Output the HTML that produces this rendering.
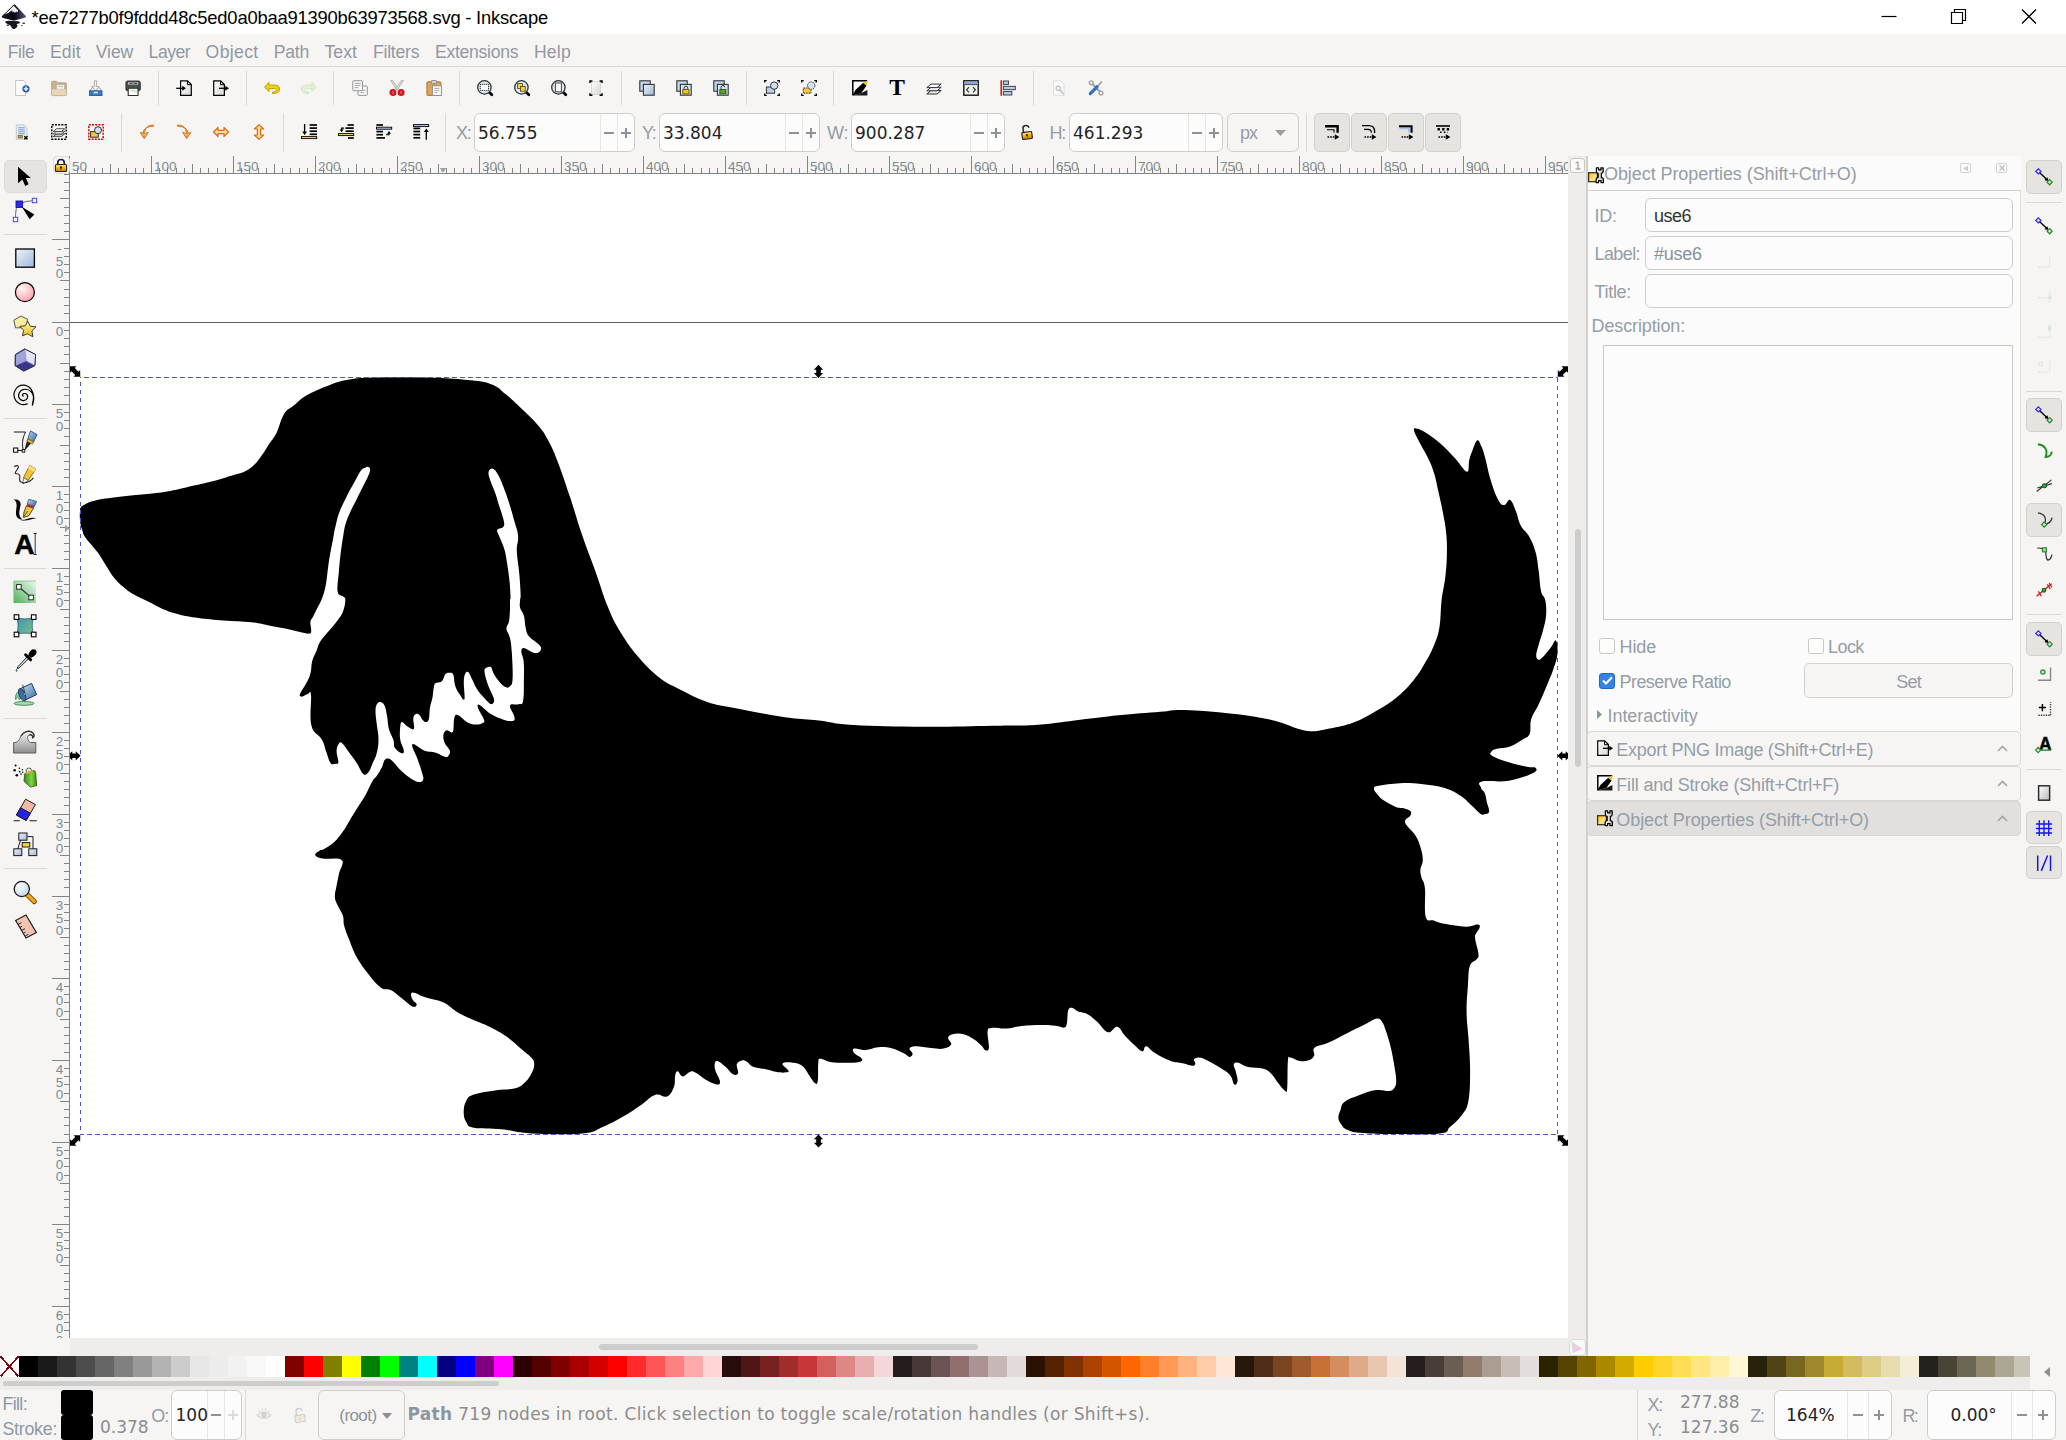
<!DOCTYPE html><html><head><meta charset="utf-8"><title>Inkscape</title><style>
*{box-sizing:border-box;margin:0;padding:0}
html,body{width:2066px;height:1440px;overflow:hidden;background:#f6f5f4}
body{position:relative;font-family:"Liberation Sans",sans-serif;color:#2e3436}
.a{position:absolute}
.t{position:absolute;white-space:pre;line-height:1}
.dj{font-family:"DejaVu Sans",sans-serif}
.g{color:#929aa3}
.fld{position:absolute;background:#fcfcfc;border:1px solid #d1cdc8;border-radius:6px}
.vs{position:absolute;width:1px;background:#e8e6e3}
.sep{position:absolute;background:#dcd9d5}
.tg{position:absolute;background:#e5e4e1;border:1px solid #d4d1cd;border-radius:5px}
svg{position:absolute;overflow:visible}
</style></head><body>
<svg width="0" height="0" style="left:0;top:0"><defs>
<linearGradient id="gPg" x1="0" y1="0" x2="1" y2="1"><stop offset="0" stop-color="#fff"/><stop offset="1" stop-color="#d6d6d2"/></linearGradient>
<linearGradient id="gBl" x1="0" y1="0" x2="1" y2="1"><stop offset="0" stop-color="#eef3f9"/><stop offset="1" stop-color="#9db8d8"/></linearGradient>
<linearGradient id="gPk" x1="0" y1="0" x2="0" y2="1"><stop offset="0" stop-color="#ff9aa2"/><stop offset="1" stop-color="#ffeef0"/></linearGradient>
<linearGradient id="gYl" x1="0" y1="0" x2="0" y2="1"><stop offset="0" stop-color="#fff3a0"/><stop offset="1" stop-color="#e8c21a"/></linearGradient>
<linearGradient id="gGr" x1="0" y1="0" x2="1" y2="1"><stop offset="0" stop-color="#9bd3a0"/><stop offset="1" stop-color="#e9f6ea"/></linearGradient>
<linearGradient id="gMs" x1="0" y1="0" x2="1" y2="1"><stop offset="0" stop-color="#3d8fb5"/><stop offset="1" stop-color="#7cc28c"/></linearGradient>
<linearGradient id="gLk" x1="0" y1="0" x2="0" y2="1"><stop offset="0" stop-color="#ffe680"/><stop offset=".5" stop-color="#f5b400"/><stop offset="1" stop-color="#c17d11"/></linearGradient>
<linearGradient id="gOr" x1="0" y1="0" x2="0" y2="1"><stop offset="0" stop-color="#fbd9a5"/><stop offset="1" stop-color="#e67e13"/></linearGradient>
<linearGradient id="gGy" x1="0" y1="0" x2="0" y2="1"><stop offset="0" stop-color="#f4f4f4"/><stop offset="1" stop-color="#8e8e8e"/></linearGradient>
<linearGradient id="gCu" x1="0" y1="0" x2="1" y2="1"><stop offset="0" stop-color="#dfe3f6"/><stop offset="1" stop-color="#3a3f9a"/></linearGradient>
<radialGradient id="gPk2" cx=".35" cy=".3" r=".8"><stop offset="0" stop-color="#fff5f6"/><stop offset="1" stop-color="#ff9ca6"/></radialGradient>
<linearGradient id="gPen" x1="0" y1="0" x2="1" y2="1"><stop offset="0" stop-color="#b9d5ee"/><stop offset="1" stop-color="#2f6aa8"/></linearGradient>
<linearGradient id="gGrad" x1="0" y1="1" x2="1" y2="0"><stop offset="0" stop-color="#4db25c"/><stop offset="1" stop-color="#eef8ef"/></linearGradient>
<linearGradient id="gBk" x1="0" y1="0" x2="1" y2="1"><stop offset="0" stop-color="#d5e6f5"/><stop offset="1" stop-color="#2f6aa8"/></linearGradient>
<linearGradient id="gCan" x1="0" y1="0" x2="1" y2="0"><stop offset="0" stop-color="#3d8a16"/><stop offset=".6" stop-color="#7ed348"/><stop offset="1" stop-color="#3d8a16"/></linearGradient>
<radialGradient id="gLens" cx=".35" cy=".3" r=".8"><stop offset="0" stop-color="#fff"/><stop offset="1" stop-color="#bcd3e8"/></radialGradient>
<linearGradient id="gOP" x1="0" y1="0" x2="1" y2="1"><stop offset="0" stop-color="#fcc200"/><stop offset=".6" stop-color="#fde58a"/><stop offset="1" stop-color="#f9c400"/></linearGradient>
<linearGradient id="gWr" x1="0" y1="0" x2="1" y2="0"><stop offset="0" stop-color="#ffffff"/><stop offset="1" stop-color="#b5b5b5"/></linearGradient>
<linearGradient id="gPg2" x1="0" y1="0" x2="1" y2="1"><stop offset="0" stop-color="#ffffff"/><stop offset="1" stop-color="#b9b9b9"/></linearGradient>
</defs></svg>
<div class="a" style="left:0;top:0;width:2066px;height:34px;background:#fff"></div>
<svg style="left:0;top:0" width="28" height="34" viewBox="0 0 28 34"><defs><linearGradient id="gLg" x1="0" y1="0" x2="1" y2="0"><stop offset="0" stop-color="#1c1c22"/><stop offset=".5" stop-color="#05050c"/><stop offset="1" stop-color="#565c7c"/></linearGradient></defs><path d="M13.65 4.7 L1.8 16.3 Q1.4 17.6 3 18 L12 20.3 Q13.8 20.7 15.6 20.2 L24.8 17.8 Q26.5 17.2 25.8 16.1 L15.3 5.1 Q14.5 4.3 13.65 4.7Z" fill="url(#gLg)"/><path d="M13.7 5.7 L4.6 14.6 L8.6 12.7 L12.2 10.2 L12.7 12.8 L14 11.5 L15 13 L16.2 11.5 L17.4 12.2 L18.2 10.4 Z" fill="#f4f4f6"/><path d="M5.2 21.5 Q9 20.2 13 21.1 L18.4 21.2 Q21.2 22.4 19 23.5 L16.6 24.1 Q18.4 26 16.6 27.4 L14.6 29 Q12.6 29.5 11.8 27.8 L10.4 25.6 L7 23.7 Q4.6 22.6 5.2 21.5Z" fill="#15171f"/><ellipse cx="7.8" cy="25.2" rx="1.2" ry=".75" fill="#15171f"/><ellipse cx="23.7" cy="23.2" rx="1.5" ry=".7" fill="#2a2c36"/><ellipse cx="21.9" cy="25.6" rx="1" ry=".5" fill="#4a4c56"/></svg>
<svg style="left:1870px;top:0" width="196" height="34" viewBox="0 0 196 34"><path d="M11.5 16.5h15" stroke="#000" stroke-width="1.2"/><path d="M81.5 12.5h11v11h-11zM84.5 12.5v-3h11v11h-3" fill="none" stroke="#000" stroke-width="1.2"/><path d="M152 9.5l14 14M166 9.5l-14 14" stroke="#000" stroke-width="1.3"/></svg>
<div class="t " id="F1" style="left:31.5px;top:9px;font-size:18.4px;color:#000;letter-spacing:-0.218px">*ee7277b0f9fddd48c5ed0a0baa91390b63973568.svg - Inkscape</div>
<div class="t " id="F2" style="left:7.7px;top:44.1px;font-size:17.6px;color:#9198a2;letter-spacing:-0.440px">File</div>
<div class="t " id="F3" style="left:50.0px;top:44.1px;font-size:17.6px;color:#9198a2;letter-spacing:0.093px">Edit</div>
<div class="t " id="F4" style="left:95.8px;top:44.1px;font-size:17.6px;color:#9198a2;letter-spacing:-0.107px">View</div>
<div class="t " id="F5" style="left:148.6px;top:44.1px;font-size:17.6px;color:#9198a2;letter-spacing:-0.483px">Layer</div>
<div class="t " id="F6" style="left:205.6px;top:44.1px;font-size:17.6px;color:#9198a2;letter-spacing:0.357px">Object</div>
<div class="t " id="F7" style="left:273.7px;top:44.1px;font-size:17.6px;color:#9198a2;letter-spacing:-0.201px">Path</div>
<div class="t " id="F8" style="left:324.5px;top:44.1px;font-size:17.6px;color:#9198a2;letter-spacing:0.030px">Text</div>
<div class="t " id="F9" style="left:373.0px;top:44.1px;font-size:17.6px;color:#9198a2;letter-spacing:-0.244px">Filters</div>
<div class="t " id="F10" style="left:435.0px;top:44.1px;font-size:17.6px;color:#9198a2;letter-spacing:-0.286px">Extensions</div>
<div class="t " id="F11" style="left:533.9000000000001px;top:44.1px;font-size:17.6px;color:#9198a2;letter-spacing:0.228px">Help</div>
<div class="a" style="left:0;top:66px;width:2066px;height:1px;background:#dad7d3"></div>
<svg style="left:14.0px;top:80.0px" width="16" height="16" viewBox="0 0 16 16" ><path d="M1.6 .5h8l2 2v13h-10z" fill="#fdfdfd" stroke="#bdbdbd" stroke-width=".9"/><circle cx="12" cy="8.8" r="3.6" fill="#2a5db0"/><path d="M9.8 8.8h4.4M12 6.6v4.4" stroke="#fff" stroke-width="1.3"/></svg>
<svg style="left:51.0px;top:80.0px" width="16" height="16" viewBox="0 0 16 16" ><path d="M.6 2.3q0-1 1-1h4l1.4 1.5h7.4q1 0 1 1v10.8q0 1-1 1h-12.8q-1 0-1-1z" fill="#c9b18c" stroke="#b69e7a" stroke-width=".8"/><rect x="5.3" y="4.8" width="8.2" height="4.4" fill="#f3f3f3" stroke="#a9a9a9" stroke-width=".6"/><path d="M7 6.6h5" stroke="#b5b5b5" stroke-width=".8"/><path d="M.9 10.3q0-1 1-1h12.2q1 0 1 1v4.2q0 .8-1 .8h-12.2q-1 0-1-.8z" fill="#e7d6bb"/></svg>
<svg style="left:88.0px;top:80.0px" width="16" height="16" viewBox="0 0 16 16" ><path d="M6.3 .8h2.4v5.8h2.6L7.5 10.6 3.7 6.6h2.6z" fill="#f0f0f0" stroke="#9c9c9c" stroke-width=".8"/><path d="M2 11 L3.6 8h1.4M13.6 11 L12 8h-1.4" stroke="#a0a0a0" fill="none" stroke-width=".8"/><rect x="1.5" y="10.8" width="12.5" height="4.7" fill="#3b78c6" stroke="#2b5b9e" stroke-width=".9"/><rect x="5.6" y="11.8" width="4.4" height="1.5" fill="#e4ecf6"/></svg>
<svg style="left:125.0px;top:80.0px" width="16" height="16" viewBox="0 0 16 16" ><rect x=".9" y="1" width="14.4" height="9.8" rx="1.6" fill="#4b4e50" stroke="#2c2e2f" stroke-width=".9"/><rect x="3" y="2.3" width="10.2" height="2.3" fill="#bfc1c2"/><rect x="4.5" y="2.9" width="3" height="1.1" fill="#4b4e50"/><rect x="8.5" y="2.9" width="3.5" height="1.1" fill="#4b4e50"/><path d="M3.2 8.3h9.8v7.2h-9.8z" fill="#fff" stroke="#2c2e2f" stroke-width="1.1"/><path d="M5 10.3h4.5v1.6h2.5" stroke="#9cd47e" stroke-width=".8" fill="none"/></svg>
<div class="sep" style="left:157.5px;top:71px;width:1px;height:34px"></div>
<svg style="left:176.0px;top:80.0px" width="16" height="16" viewBox="0 0 16 16" ><path d="M4.6 .8h7l3.7 3.7v10.8h-10.7z" fill="url(#gPg)" stroke="#000" stroke-width="1.2"/><path d="M11.4 1v3.7h3.7" fill="none" stroke="#000" stroke-width="1"/><path d="M.2 8.3h7" stroke="#000" stroke-width="1.3"/><path d="M6.3 5.8 L10 8.3 L6.3 10.8z" fill="#000"/></svg>
<svg style="left:213.0px;top:80.0px" width="16" height="16" viewBox="0 0 16 16" ><path d="M.7 .8h7l3.7 3.7v10.8h-10.7z" fill="url(#gPg)" stroke="#000" stroke-width="1.2"/><path d="M7.5 1v3.7h3.7" fill="none" stroke="#000" stroke-width="1"/><path d="M6 8.3h7" stroke="#000" stroke-width="1.3"/><path d="M12.3 5.8 L16 8.3 L12.3 10.8z" fill="#000"/></svg>
<div class="sep" style="left:245.5px;top:71px;width:1px;height:34px"></div>
<svg style="left:263.5px;top:80.0px" width="16" height="16" viewBox="0 0 16 16" ><path d="M.5 7 L5 2.3 V5 H10.5 Q15.6 5 15.6 9.2 Q15.6 13.6 8.3 13.5 L8.6 12 Q12.6 12.2 12.8 9.8 Q12.8 8.5 10.5 8.6 H5 V11.6Z" fill="#edd400" stroke="#b89c00" stroke-width=".9" stroke-linejoin="round"/></svg>
<svg style="left:300.5px;top:80.0px" width="16" height="16" viewBox="0 0 16 16" ><path d="M15.5 7 L11 2.3 V5 H5.5 Q.4 5 .4 9.2 Q.4 13.6 7.7 13.5 L7.4 12 Q3.4 12.2 3.2 9.8 Q3.2 8.5 5.5 8.6 H11 V11.6Z" fill="#e1f0d6" stroke="#cfe4c1" stroke-width=".9" stroke-linejoin="round"/></svg>
<div class="sep" style="left:333.0px;top:71px;width:1px;height:34px"></div>
<svg style="left:351.5px;top:80.0px" width="16" height="16" viewBox="0 0 16 16" ><rect x="6" y="6" width="9.3" height="9.4" rx="1" fill="#f6f6f6" stroke="#8c8c8c" stroke-width=".9"/><path d="M8.5 10.5h5M8.5 12.5h3.3" stroke="#a3a3a3" stroke-width=".9"/><rect x=".8" y=".7" width="9.7" height="10" rx="1" fill="#f6f6f6" stroke="#8c8c8c" stroke-width=".9"/><path d="M2.8 3.4h5.7M2.8 5.5h5.7M2.8 7.6h3.6" stroke="#a3a3a3" stroke-width=".9"/></svg>
<svg style="left:388.5px;top:80.0px" width="16" height="16" viewBox="0 0 16 16" ><path d="M1.6 .4 L3.6 .4 L9.4 9 L7.8 10.2z" fill="#e3e3e3" stroke="#8d8d8d" stroke-width=".6"/><path d="M14.4 .4 L12.4 .4 L6.6 9 L8.2 10.2z" fill="#e3e3e3" stroke="#8d8d8d" stroke-width=".6"/><circle cx="3.9" cy="12.5" r="2.2" fill="#f4f4f4" stroke="#d4141c" stroke-width="2.6"/><circle cx="12.1" cy="12.5" r="2.2" fill="#f4f4f4" stroke="#d4141c" stroke-width="2.6"/><circle cx="3.9" cy="12.5" r=".7" fill="#d4141c"/><circle cx="12.1" cy="12.5" r=".7" fill="#d4141c"/></svg>
<svg style="left:426.0px;top:80.0px" width="16" height="16" viewBox="0 0 16 16" ><rect x=".9" y="1.8" width="14" height="13.6" rx="1" fill="#dca35e" stroke="#a96d1d" stroke-width=".9"/><rect x="5.3" y=".5" width="5.2" height="3.2" rx="1" fill="#d3d3d3" stroke="#787878" stroke-width=".8"/><rect x="6.4" y="5.8" width="9" height="9.7" fill="#f9f9f9" stroke="#8c8c8c" stroke-width=".9"/><path d="M8.4 8.4h5M8.4 10.4h5M8.4 12.4h3.2" stroke="#a3a3a3" stroke-width=".9"/></svg>
<div class="sep" style="left:458.5px;top:71px;width:1px;height:34px"></div>
<svg style="left:476.5px;top:80.0px" width="16" height="16" viewBox="0 0 16 16" ><path d="M12.2 12.2 L14.8 14.8" stroke="#000" stroke-width="2.8" stroke-linecap="round"/><circle cx="7.4" cy="7.4" r="6.7" fill="#dce7f2" stroke="#2e3436" stroke-width="1.3"/><rect x="3.3" y="4.4" width="8.2" height="6" fill="#fff" stroke="#000" stroke-dasharray="1 1" stroke-width="1"/></svg>
<svg style="left:513.5px;top:80.0px" width="16" height="16" viewBox="0 0 16 16" ><path d="M12.2 12.2 L14.8 14.8" stroke="#000" stroke-width="2.8" stroke-linecap="round"/><circle cx="7.4" cy="7.4" r="6.7" fill="#dce7f2" stroke="#2e3436" stroke-width="1.3"/><rect x="3.6" y="3.6" width="4.8" height="4.8" fill="#f5d14b" stroke="#4d3f00" stroke-width=".8"/><rect x="6.4" y="6.4" width="4.8" height="4.8" fill="#f5d14b" stroke="#4d3f00" stroke-width=".8"/></svg>
<svg style="left:551.0px;top:80.0px" width="16" height="16" viewBox="0 0 16 16" ><path d="M12.2 12.2 L14.8 14.8" stroke="#000" stroke-width="2.8" stroke-linecap="round"/><circle cx="7.4" cy="7.4" r="6.7" fill="#dce7f2" stroke="#2e3436" stroke-width="1.3"/><rect x="4.4" y="3" width="6" height="8.8" fill="#fff" stroke="#555" stroke-width="1.1"/></svg>
<svg style="left:588.0px;top:80.0px" width="16" height="16" viewBox="0 0 16 16" ><rect x="3.4" y="1.8" width="9.2" height="12.6" fill="url(#gPg)" stroke="#cfcfcf" stroke-width=".8"/><path d="M2 3V1h2.4M11.6 1H14V3M2 13.2v2h2.4M11.6 15.2H14v-2" stroke="#000" stroke-width="1.5" fill="none"/></svg>
<div class="sep" style="left:620.5px;top:71px;width:1px;height:34px"></div>
<svg style="left:638.5px;top:80.0px" width="16" height="16" viewBox="0 0 16 16" ><rect x=".8" y=".8" width="10.4" height="10.4" fill="#c3d4e9" stroke="#2e3436" stroke-width="1.1"/><rect x="4.4" y="4.4" width="10.8" height="10.8" fill="url(#gBl)" stroke="#2e3436" stroke-width="1.1"/></svg>
<svg style="left:676.0px;top:80.0px" width="16" height="16" viewBox="0 0 16 16" ><rect x=".8" y=".8" width="10.4" height="10.4" fill="#c3d4e9" stroke="#2e3436" stroke-width="1.1"/><rect x="4.4" y="4.4" width="10.8" height="10.8" fill="#d9e5f2" stroke="#2e3436" stroke-width="1.1"/><path d="M8 9.6v-1.5a1.9 1.9 0 0 1 3.8 0v1.5" fill="none" stroke="#333" stroke-width="1"/><rect x="6.8" y="9.6" width="6.2" height="4.3" fill="#f5c211" stroke="#5a4500" stroke-width=".8"/></svg>
<svg style="left:713.0px;top:80.0px" width="16" height="16" viewBox="0 0 16 16" ><rect x=".8" y=".8" width="10.4" height="10.4" fill="#c3d4e9" stroke="#2e3436" stroke-width="1.1"/><rect x="4.4" y="4.4" width="10.8" height="10.8" fill="#d9e5f2" stroke="#2e3436" stroke-width="1.1"/><path d="M8 9.6v-2a1.9 1.9 0 0 1 3.8-.4" fill="none" stroke="#333" stroke-width="1"/><rect x="6.8" y="9.6" width="6.2" height="4.3" fill="#5aa02c" stroke="#1e4d00" stroke-width=".8"/></svg>
<div class="sep" style="left:745.5px;top:71px;width:1px;height:34px"></div>
<svg style="left:763.5px;top:80.0px" width="16" height="16" viewBox="0 0 16 16" ><path d="M.7 2.6V.7h2M13.3 .7h2V2.6M.7 13.4v1.9h2M13.3 15.3h2V13.4" stroke="#000" stroke-width="1.3" fill="none"/><rect x="2.4" y="7" width="8.2" height="6.2" fill="#bcd0e6" stroke="#2e3436" stroke-width="1"/><circle cx="10.2" cy="5.6" r="3.7" fill="#d2e0f0" stroke="#2e3436" stroke-width="1"/></svg>
<svg style="left:801.0px;top:80.0px" width="16" height="16" viewBox="0 0 16 16" ><path d="M.7 2.6V.7h2M13.3 .7h2V2.6M.7 13.4v1.9h2M13.3 15.3h2V13.4" stroke="#000" stroke-width="1.3" fill="none"/><rect x="2.4" y="8" width="7.6" height="5.2" fill="#f5c936" stroke="#2e3436" stroke-width="1" stroke-dasharray="1.5 .8"/><circle cx="10.2" cy="5.6" r="3.7" fill="#d2e0f0" stroke="#2e3436" stroke-width="1" stroke-dasharray="1.5 .8"/></svg>
<div class="sep" style="left:833.0px;top:71px;width:1px;height:34px"></div>
<svg style="left:851.5px;top:80.0px" width="16" height="16" viewBox="0 0 16 16" ><path d="M.9 15.2V.9H15.2" fill="none" stroke="#000" stroke-width="1.7"/><rect x="1.7" y="1.7" width="13.4" height="13.4" fill="#fff"/><path d="M.4 15.6 L3.4 10 L11.2 2.8 L14.6 5.4 L9.4 13 Z" fill="#000"/><path d="M11.2 2.8 L15.8 .2 L14.6 5.4z" fill="#f5c211"/><path d="M.4 15.6 L9.4 13 L15.4 10 V15.6z" fill="#000" opacity=".9"/></svg>
<svg style="left:888.5px;top:80.0px" width="16" height="16" viewBox="0 0 16 16" ><text x="8" y="15.4" text-anchor="middle" font-family="Liberation Serif,serif" font-weight="700" font-size="23.5" fill="#000">T</text></svg>
<svg style="left:926.0px;top:80.0px" width="16" height="16" viewBox="0 0 16 16" ><path d="M.8 14 L5 10.5 H15.2 L11 14z" fill="#e8e8e8" stroke="#2e3436" stroke-width="1" stroke-linejoin="round"/><path d="M.8 10.8 L5 7.3 H15.2 L11 10.8z" fill="#f4f4f4" stroke="#2e3436" stroke-width="1" stroke-linejoin="round"/><path d="M.8 7.6 L5 4.1 H15.2 L11 7.6z" fill="#fff" stroke="#2e3436" stroke-width="1" stroke-linejoin="round"/></svg>
<svg style="left:963.0px;top:80.0px" width="16" height="16" viewBox="0 0 16 16" ><rect x=".8" y=".8" width="14.4" height="14.4" fill="#f0f0ee" stroke="#000" stroke-width="1.3"/><rect x="1.5" y="1.5" width="13" height="2.6" fill="#83a8da"/><path d="M1.5 4.6h13" stroke="#000" stroke-width=".7"/><path d="M6 7.2 L3.6 9.8 L6 12.4 M10 7.2 L12.4 9.8 L10 12.4" fill="none" stroke="#333" stroke-width="1.2"/></svg>
<svg style="left:1000.0px;top:80.0px" width="16" height="16" viewBox="0 0 16 16" ><path d="M1.2 .3v15.4" stroke="#d40000" stroke-width="1.4"/><rect x="3.3" y="1" width="5.2" height="3.4" fill="#b7cde6" stroke="#2e3436" stroke-width=".9"/><rect x="3.3" y="6.3" width="12" height="3.4" fill="#b7cde6" stroke="#2e3436" stroke-width=".9"/><rect x="3.3" y="11.6" width="8.6" height="3.4" fill="#b7cde6" stroke="#2e3436" stroke-width=".9"/></svg>
<div class="sep" style="left:1032.5px;top:71px;width:1px;height:34px"></div>
<svg style="left:1050.5px;top:80.0px" width="16" height="16" viewBox="0 0 16 16" ><path d="M2.5 .8h7.2l3.3 3.3v11.2h-10.5z" fill="#fafafa" stroke="#d9d9d9" stroke-width=".9"/><circle cx="7.3" cy="8.3" r="2.1" fill="none" stroke="#c6c6c6" stroke-width="1.5"/><path d="M8.8 9.8 L12.8 14.3" stroke="#c6c6c6" stroke-width="1.9"/></svg>
<svg style="left:1087.5px;top:80.0px" width="16" height="16" viewBox="0 0 16 16" ><path d="M3.5 3 L12.8 12.8" stroke="#a3a3a3" stroke-width="2.2"/><circle cx="3.2" cy="2.8" r="1.9" fill="#f6f5f4" stroke="#a3a3a3" stroke-width="1.4"/><circle cx="13" cy="13" r="1.9" fill="#f6f5f4" stroke="#a3a3a3" stroke-width="1.4"/><path d="M9.5 6.5 L14 1.5" stroke="#9a9a9a" stroke-width="1.6"/><path d="M2.3 13.7 L9 6.8" stroke="#2f6fc4" stroke-width="3.2" stroke-linecap="round"/></svg>
<svg style="left:14.0px;top:124.0px" width="16" height="16" viewBox="0 0 16 16" ><path d="M2.3 .8h7.7l3 3v11.5h-10.7z" fill="#e3ebf5" stroke="#c6c6c6" stroke-width=".9"/><path d="M4.2 3.8h6.6M4.2 5.8h6.6M4.2 7.8h6.6M4.2 9.8h6.6" stroke="#7aa2d4" stroke-width="1.1"/><rect x="4.2" y="11.3" width="4.2" height="2.7" fill="#c4a000" stroke="#555" stroke-width=".6"/><path d="M10.3 12.2 l3.2 3 m0 -3 l-3.2 3" stroke="#000" stroke-width="1.4"/></svg>
<svg style="left:51.0px;top:124.0px" width="16" height="16" viewBox="0 0 16 16" ><rect x=".8" y=".8" width="14.4" height="14.4" fill="none" stroke="#000" stroke-width="1.4" stroke-dasharray="2 1.2"/><g transform="translate(1.6 1.4) scale(.8)"><path d="M.8 14 L5 10.5 H15.2 L11 14z" fill="#c8c8c8" stroke="#2e3436" stroke-width="1" stroke-linejoin="round"/><path d="M.8 10.8 L5 7.3 H15.2 L11 10.8z" fill="#ddd" stroke="#2e3436" stroke-width="1" stroke-linejoin="round"/><path d="M.8 7.6 L5 4.1 H15.2 L11 7.6z" fill="#f2f2f2" stroke="#2e3436" stroke-width="1" stroke-linejoin="round"/></g></svg>
<svg style="left:88.0px;top:124.0px" width="16" height="16" viewBox="0 0 16 16" ><rect x=".8" y=".8" width="14.4" height="14.4" fill="none" stroke="#d40000" stroke-width="1.4" stroke-dasharray="2 1.2"/><rect x="2.6" y="7.6" width="7.6" height="5.6" fill="#f5c936" stroke="#2e3436" stroke-width="1"/><circle cx="10" cy="6.2" r="3.5" fill="#d2e0f0" stroke="#2e3436" stroke-width="1"/></svg>
<div class="sep" style="left:120.5px;top:113px;width:1px;height:39px"></div>
<svg style="left:138.5px;top:124.0px" width="16" height="16" viewBox="0 0 16 16" ><path d="M14.6 1 Q6.6 .6 5.6 8.6 L4 8.6 Q4.6 2.6 14.6 2.2Z" fill="#f0a24a" stroke="#d06a0a" stroke-width=".8"/><path d="M1.2 8.4 L5.2 14.6 L9.4 8.4 L5.3 9.6z" fill="url(#gOr)" stroke="#c9650a" stroke-width=".9" stroke-linejoin="round"/></svg>
<svg style="left:176.0px;top:124.0px" width="16" height="16" viewBox="0 0 16 16" ><path d="M1.4 1 Q9.4 .6 10.4 8.6 L12 8.6 Q11.4 2.6 1.4 2.2Z" fill="#f0a24a" stroke="#d06a0a" stroke-width=".8"/><path d="M14.8 8.4 L10.8 14.6 L6.6 8.4 L10.7 9.6z" fill="url(#gOr)" stroke="#c9650a" stroke-width=".9" stroke-linejoin="round"/></svg>
<svg style="left:213.0px;top:124.0px" width="16" height="16" viewBox="0 0 16 16" ><path d="M.6 8 L5 3.4 V6.4 H11 V3.4 L15.4 8 L11 12.6 V9.6 H5 V12.6z" fill="#fbd8a8" stroke="#d56d0a" stroke-width="1.2" stroke-linejoin="round"/></svg>
<svg style="left:250.5px;top:124.0px" width="16" height="16" viewBox="0 0 16 16" ><g transform="rotate(90 8 8)"><path d="M.6 8 L5 3.4 V6.4 H11 V3.4 L15.4 8 L11 12.6 V9.6 H5 V12.6z" fill="#fbd8a8" stroke="#d56d0a" stroke-width="1.2" stroke-linejoin="round"/></g></svg>
<div class="sep" style="left:283.0px;top:113px;width:1px;height:39px"></div>
<svg style="left:301.0px;top:124.0px" width="16" height="16" viewBox="0 0 16 16" ><path d="M8.6 1h7.4" stroke="#000" stroke-width="1.7"/><path d="M8.6 4.1h7.4" stroke="#000" stroke-width="1.7"/><path d="M8.6 7.2h7.4" stroke="#000" stroke-width="1.7"/><path d="M8.6 10.3h7.4" stroke="#000" stroke-width="1.7"/><path d="M3.6 0v8.5" stroke="#000" stroke-width="1.3"/><path d="M1.2 7.4h4.8L3.6 11z" fill="#000"/><rect x=".5" y="12.6" width="15.2" height="2" fill="#f7d55a" stroke="#000" stroke-width=".9"/></svg>
<svg style="left:338.0px;top:124.0px" width="16" height="16" viewBox="0 0 16 16" ><path d="M9.5 1h6.3" stroke="#000" stroke-width="1.7"/><path d="M7.5 4.1h8.3" stroke="#000" stroke-width="1.7"/><path d="M7.5 7.2h8.3" stroke="#000" stroke-width="1.7"/><path d="M10 14h5.8" stroke="#000" stroke-width="1.7"/><rect x=".5" y="9.6" width="15.2" height="2" fill="#f7d55a" stroke="#000" stroke-width=".9"/><path d="M6.2 4.1h-2.6v2.2" fill="none" stroke="#000" stroke-width="1.1"/><path d="M1.6 5.6h4L3.6 8.3z" fill="#000"/></svg>
<svg style="left:375.5px;top:124.0px" width="16" height="16" viewBox="0 0 16 16" ><path d="M0.4 1h6.6" stroke="#000" stroke-width="1.7"/><path d="M0.4 7.6h6.6" stroke="#000" stroke-width="1.7"/><path d="M0.4 10.7h6.6" stroke="#000" stroke-width="1.7"/><path d="M0.4 13.9h8.6" stroke="#000" stroke-width="1.7"/><rect x=".5" y="3.2" width="15.2" height="2" fill="#b7cde6" stroke="#000" stroke-width=".9"/><path d="M10 10.7h3v-1.6" fill="none" stroke="#000" stroke-width="1.1"/><path d="M11 9.7h4L13 7z" fill="#000"/></svg>
<svg style="left:412.5px;top:124.0px" width="16" height="16" viewBox="0 0 16 16" ><path d="M0.4 4.4h6.8" stroke="#000" stroke-width="1.7"/><path d="M0.4 7.5h6.8" stroke="#000" stroke-width="1.7"/><path d="M0.4 10.6h6.8" stroke="#000" stroke-width="1.7"/><path d="M0.4 13.8h6.8" stroke="#000" stroke-width="1.7"/><rect x=".5" y=".6" width="15.2" height="2" fill="#b7cde6" stroke="#000" stroke-width=".9"/><path d="M13.3 15.8V7" stroke="#000" stroke-width="1.3"/><path d="M10.9 8h4.8L13.3 4.4z" fill="#000"/></svg>
<div class="sep" style="left:445.0px;top:113px;width:1px;height:39px"></div>
<div class="t " id="F12" style="left:456px;top:123.5px;font-size:18px;color:#949ba4;letter-spacing:-1.208px">X:</div>
<div class="fld" style="left:474px;top:113px;width:161px;height:39px"></div>
<div class="vs" style="left:600px;top:114px;height:37px"></div>
<div class="vs" style="left:617px;top:114px;height:37px"></div>
<div class="t dj" style="left:478px;top:125.1px;font-size:17px;color:#1f2326">56.755</div>
<div class="a" style="left:604.0px;top:132.3px;width:10px;height:1.5px;background:#8f9294"></div>
<div class="a" style="left:621.0px;top:132.3px;width:10px;height:1.5px;background:#8f9294"></div>
<div class="a" style="left:625.25px;top:128.0px;width:1.5px;height:10px;background:#8f9294"></div>
<div class="t " id="F13" style="left:642px;top:123.5px;font-size:18px;color:#949ba4;letter-spacing:-1.258px">Y:</div>
<div class="fld" style="left:659px;top:113px;width:161px;height:39px"></div>
<div class="vs" style="left:785px;top:114px;height:37px"></div>
<div class="vs" style="left:802px;top:114px;height:37px"></div>
<div class="t dj" style="left:663px;top:125.1px;font-size:17px;color:#1f2326">33.804</div>
<div class="a" style="left:789.0px;top:132.3px;width:10px;height:1.5px;background:#8f9294"></div>
<div class="a" style="left:806.0px;top:132.3px;width:10px;height:1.5px;background:#8f9294"></div>
<div class="a" style="left:810.25px;top:128.0px;width:1.5px;height:10px;background:#8f9294"></div>
<div class="t " id="F14" style="left:827px;top:123.5px;font-size:18px;color:#949ba4;letter-spacing:-0.186px">W:</div>
<div class="fld" style="left:851px;top:113px;width:154px;height:39px"></div>
<div class="vs" style="left:970px;top:114px;height:37px"></div>
<div class="vs" style="left:987px;top:114px;height:37px"></div>
<div class="t dj" style="left:855px;top:125.1px;font-size:17px;color:#1f2326">900.287</div>
<div class="a" style="left:974.0px;top:132.3px;width:10px;height:1.5px;background:#8f9294"></div>
<div class="a" style="left:991.0px;top:132.3px;width:10px;height:1.5px;background:#8f9294"></div>
<div class="a" style="left:995.25px;top:128.0px;width:1.5px;height:10px;background:#8f9294"></div>
<svg style="left:1019.0px;top:124.0px" width="16" height="16" viewBox="0 0 16 16" ><g transform="rotate(-8 8 8)"><path d="M4.5 8.5V4.6a3 3 0 0 1 6-.5" fill="none" stroke="#2b2b2b" stroke-width="1.5"/><rect x="2.6" y="8" width="10" height="7" rx="1" fill="url(#gLk)" stroke="#1f1f1f" stroke-width="1.1"/><circle cx="7.6" cy="11" r="1" fill="#222"/><path d="M7.6 11v2" stroke="#222" stroke-width="1"/></g></svg>
<div class="t " id="F15" style="left:1049.5px;top:123.5px;font-size:18px;color:#949ba4;letter-spacing:-1.150px">H:</div>
<div class="fld" style="left:1069px;top:113px;width:154px;height:39px"></div>
<div class="vs" style="left:1188px;top:114px;height:37px"></div>
<div class="vs" style="left:1205px;top:114px;height:37px"></div>
<div class="t dj" style="left:1073px;top:125.1px;font-size:17px;color:#1f2326">461.293</div>
<div class="a" style="left:1192.0px;top:132.3px;width:10px;height:1.5px;background:#8f9294"></div>
<div class="a" style="left:1209.0px;top:132.3px;width:10px;height:1.5px;background:#8f9294"></div>
<div class="a" style="left:1213.25px;top:128.0px;width:1.5px;height:10px;background:#8f9294"></div>
<div class="fld" style="left:1227px;top:113px;width:72px;height:39px;background:#f6f5f4"></div>
<div class="t " id="F16" style="left:1240px;top:123.5px;font-size:18px;color:#949ba4;letter-spacing:-1.008px">px</div>
<svg style="left:1275px;top:129.5px" width="11" height="6" viewBox="0 0 11 6"><path d="M0 0h11L5.5 6z" fill="#9a9d9f"/></svg>
<div class="sep" style="left:1305.5px;top:113px;width:1px;height:39px"></div>
<div class="tg" style="left:1314px;top:113px;width:36px;height:39px"></div>
<svg style="left:1324.0px;top:124.0px" width="16" height="16" viewBox="0 0 16 16" ><path d="M1 2.2h12.6v6.6" fill="none" stroke="#000" stroke-width="2.4"/><path d="M3 5.8h7v3" fill="none" stroke="#000" stroke-width="1.1"/><path d="M3.5 13h7.5" stroke="#000" stroke-width="1.3" stroke-dasharray="1.6 1"/><path d="M10.8 10.3l4.6 2.7l-4.6 2.7z" fill="#000"/></svg>
<div class="tg" style="left:1351px;top:113px;width:36px;height:39px"></div>
<svg style="left:1361.0px;top:124.0px" width="16" height="16" viewBox="0 0 16 16" ><path d="M1 1.6h7q5.6 0 5.6 6v1.4" fill="none" stroke="#000" stroke-width="1.4"/><path d="M3 5.4h4q3.4 0 3.4 3.4" fill="none" stroke="#000" stroke-width="1.1"/><path d="M3.5 13h7.5" stroke="#000" stroke-width="1.3" stroke-dasharray="1.6 1"/><path d="M10.8 10.3l4.6 2.7l-4.6 2.7z" fill="#000"/></svg>
<div class="tg" style="left:1388px;top:113px;width:36px;height:39px"></div>
<svg style="left:1398.0px;top:124.0px" width="16" height="16" viewBox="0 0 16 16" ><path d="M1.5 2.2h11.5v6.3h-3v-3.3h-8.5z" fill="#a9c3e2"/><path d="M1 2.2h12.6v6.6" fill="none" stroke="#000" stroke-width="2"/><path d="M3.5 13h7.5" stroke="#000" stroke-width="1.3" stroke-dasharray="1.6 1"/><path d="M10.8 10.3l4.6 2.7l-4.6 2.7z" fill="#000"/></svg>
<div class="tg" style="left:1425px;top:113px;width:36px;height:39px"></div>
<svg style="left:1435.0px;top:124.0px" width="16" height="16" viewBox="0 0 16 16" ><path d="M1 2h14" stroke="#000" stroke-width="1.6"/><path d="M2.5 5.2h12" stroke="#000" stroke-width="2.4" stroke-dasharray="2.4 2.2"/><path d="M5 8.2h8" stroke="#000" stroke-width="1.6" stroke-dasharray="1.6 2.2"/><path d="M3.5 13h7.5" stroke="#000" stroke-width="1.3" stroke-dasharray="1.6 1"/><path d="M10.8 10.3l4.6 2.7l-4.6 2.7z" fill="#000"/></svg>
<div class="tg" style="left:4px;top:160px;width:43px;height:33px;border-color:#dedbd8"></div>
<svg style="left:13.0px;top:165.0px" width="24" height="24" viewBox="0 0 24 24" ><path d="M5 1.8 V18.2 L9.4 14.4 L12.2 20.9 L15.6 19.3 L12.8 13 H17.8Z" fill="#000"/></svg>
<svg style="left:13.0px;top:199.0px" width="24" height="24" viewBox="0 0 24 24" ><path d="M2.5 20.5 Q2.2 6.5 6.3 5.3 Q12 1.6 21.5 1.5" fill="none" stroke="#6b6b6b" stroke-width="1"/><rect x="3" y="2" width="6.6" height="6.5" fill="#2b2be6" stroke="#1010b0" stroke-width=".9"/><rect x="19.3" y="-.7" width="4.4" height="4.4" fill="#f6f5f4" stroke="#4646f0" stroke-width="1"/><rect x=".3" y="18.3" width="4.4" height="4.4" fill="#f6f5f4" stroke="#4646f0" stroke-width="1"/><path d="M8.8 7.8 L21.4 15.4 L16.6 20.3Z" fill="#000"/></svg>
<div class="sep" style="left:4px;top:233.5px;width:43px;height:1px"></div>
<svg style="left:13.0px;top:246.0px" width="24" height="24" viewBox="0 0 24 24" ><rect x="2.8" y="3" width="18.6" height="18.2" fill="url(#gBl)" stroke="#000" stroke-width="1.3"/></svg>
<svg style="left:13.0px;top:280.0px" width="24" height="24" viewBox="0 0 24 24" ><circle cx="11.9" cy="12.2" r="9.5" fill="url(#gPk2)" stroke="#000" stroke-width="1.2"/></svg>
<svg style="left:13.0px;top:314.5px" width="24" height="24" viewBox="0 0 24 24" ><path d="M8 1 L14.5 4.2 L13.3 12.6 L2.5 12.9 L.8 5.2Z" fill="#f7eea0" stroke="#555" stroke-width="1"/><path d="M14.7 6.2 L17.3 11.2 L23 11.8 L18.9 15.9 L19.9 21.8 L14.6 18.8 L9.5 20.8 L10.6 15.3 L6.8 11.3 L12.2 10.8Z" fill="url(#gYl)" stroke="#3d3d3d" stroke-width="1"/></svg>
<svg style="left:13.0px;top:348.0px" width="24" height="24" viewBox="0 0 24 24" ><path d="M11.7 1 L22.6 6.5 L21.8 17.6 L10.8 23 L2.2 17.7 L2.4 6.7Z" fill="#a3a3dc" stroke="#33334d" stroke-width="1"/><path d="M11.7 1 L22.6 6.5 L21.8 17.6 L13.2 13Z" fill="#e3e3f8"/><path d="M13.2 13 L21.8 17.6 L10.8 23 L2.2 17.7Z" fill="#37378c"/><path d="M11.7 1 L13.2 13 M13.2 13 L21.8 17.6 M13.2 13 L2.2 17.7" stroke="#8888c8" stroke-width=".7" fill="none"/><path d="M11.7 1 L22.6 6.5 L21.8 17.6 L10.8 23 L2.2 17.7 L2.4 6.7Z" fill="none" stroke="#33334d" stroke-width="1"/></svg>
<svg style="left:13.0px;top:382.5px" width="24" height="24" viewBox="0 0 24 24" ><path d="M10.6 13.4 C9 13.2 9 11 10.8 10.6 C13.6 10 15.3 12.6 14.4 15 C13.2 18.2 8.6 18.4 6.6 15.6 C4.2 12.2 6.4 7.2 10.8 6.4 C16.8 5.3 21.4 10.8 20.3 16.6 C20 18.6 19.6 20.6 19.3 22.6 M19.3 22.6 C22.6 14 20 3.6 11.4 2.2 C4.6 1.2 -.2 8 1.3 14.2 C2.8 20.4 9.6 23.2 14.6 20.6" fill="none" stroke="#000" stroke-width="1.2"/></svg>
<div class="sep" style="left:4px;top:417.5px;width:43px;height:1px"></div>
<svg style="left:13.0px;top:429.5px" width="24" height="24" viewBox="0 0 24 24" ><path d="M.8 2 H12.5 C9.5 8 8.5 14.5 10.5 20.5 H3.5" fill="none" stroke="#1a1a1a" stroke-width="1"/><rect x=".6" y="18" width="4.2" height="4.2" fill="#fff" stroke="#000" stroke-width="1"/><rect x="9.2" y="19.5" width="2.6" height="2.6" fill="#fff" stroke="#000" stroke-width=".9"/><path d="M17.5 .8 L24 4.6 L20.5 12 L14.8 8.8Z" fill="url(#gPen)" stroke="#27456b" stroke-width=".8"/><path d="M14.8 8.8 L20.5 12 L19.4 14.2 L13.9 11Z" fill="#f3c62e" stroke="#6b5200" stroke-width=".7"/><path d="M13.9 11.2 L18 13.6 L12.4 19.8 L11.6 19.2Z" fill="#222"/></svg>
<svg style="left:13.0px;top:464.0px" width="24" height="24" viewBox="0 0 24 24" ><path d="M1.2 2.8 C4 .8 6.5 1.4 4.8 4.6 C3 7.6 .6 9.6 3.8 9.8 C6.6 10 7.4 12 6.6 15 C6 17.6 8.8 19.2 12.4 18.6 C15.8 18 18.6 16.2 20.4 13.8" fill="none" stroke="#222" stroke-width="1.1"/><path d="M16.6 1.4 L22.8 5 L15.2 16.4 L10.6 13.6Z" fill="#f6c431" stroke="#7a5a00" stroke-width=".8"/><path d="M16.6 1.4 L22.8 5 L21 7.8 L14.8 4.2Z" fill="#fbe27a"/><path d="M10.6 13.6 L15.2 16.4 L9.8 19.8 Z" fill="#fff" stroke="#555" stroke-width=".8"/><path d="M10.2 18 L11.8 18.9 L9.8 19.8Z" fill="#222"/></svg>
<svg style="left:13.0px;top:498.0px" width="24" height="24" viewBox="0 0 24 24" ><path d="M.6 1.6 C5.4 .8 8.6 3.4 7.4 8 C6.2 12.6 4.8 18.4 9.6 21.6 C6.2 21.8 2.4 19.6 3 13.4 C3.6 8.4 4.8 3.8 .6 1.6Z" fill="#000"/><path d="M7.6 22 C12.6 22.6 18.6 17.8 23.6 20.6 C19.4 20 14 24 7.6 22Z" fill="#000"/><path d="M15.8 1.2 L23.6 3.4 L21.4 8.4 L14.2 6Z" fill="url(#gPen)" stroke="#27456b" stroke-width=".7"/><path d="M14.2 6 L21.4 8.4 L20.6 10.2 L13.4 7.8Z" fill="#d81e1e"/><path d="M13.4 7.8 L20.6 10.2 L15.6 18 L10.4 19.4 L11 14Z" fill="#f6c431" stroke="#3b3b3b" stroke-width=".9"/><path d="M10.6 19 L14.6 13" stroke="#3b3b3b" stroke-width=".8"/></svg>
<svg style="left:13.0px;top:532.0px" width="24" height="24" viewBox="0 0 24 24" ><text x="11.4" y="22" text-anchor="middle" font-family="Liberation Sans,sans-serif" font-weight="700" font-size="28" fill="#000" stroke="#000" stroke-width=".5">A</text><path d="M20.6 1.5h3.2M22.2 1.5v21M20.6 22.5h3.2" stroke="#222" stroke-width=".9" fill="none"/></svg>
<div class="sep" style="left:4px;top:567.5px;width:43px;height:1px"></div>
<svg style="left:13.0px;top:579.5px" width="24" height="24" viewBox="0 0 24 24" ><rect x=".8" y="1" width="22.2" height="22" fill="url(#gGrad)"/><path d="M.8 1h22.2M.8 1v22" stroke="#7cc683" stroke-width=".8"/><path d="M6 7 L18 17.4" stroke="#2b2b2b" stroke-width="1.1"/><rect x="3.6" y="4.6" width="4.6" height="4.6" fill="#fff" stroke="#2b2b2b" stroke-width="1"/><rect x="15.8" y="15.2" width="4.6" height="4.6" fill="#fff" stroke="#2b2b2b" stroke-width="1"/></svg>
<svg style="left:13.0px;top:614.0px" width="24" height="24" viewBox="0 0 24 24" ><path d="M3.4 3 C9 5.6 15 5.4 20.8 3 C18.6 9 18.8 15 20.8 20.6 C15 18.6 9 18.6 3.4 20.6 C5.6 15 5.6 9 3.4 3Z" fill="url(#gMs)" stroke="#2f5f5f" stroke-width=".8"/><rect x="1.2" y=".8" width="4.6" height="4.6" fill="#fff" stroke="#000" stroke-width="1.1"/><rect x="18.4" y=".8" width="4.6" height="4.6" fill="#fff" stroke="#000" stroke-width="1.1"/><rect x="1.2" y="18.2" width="4.6" height="4.6" fill="#fff" stroke="#000" stroke-width="1.1"/><rect x="18.4" y="18.2" width="4.6" height="4.6" fill="#fff" stroke="#000" stroke-width="1.1"/></svg>
<svg style="left:13.0px;top:648.0px" width="24" height="24" viewBox="0 0 24 24" ><path d="M14.4 8.6 L5 18.6 L4.2 20.6 L6 20 L16 10.4Z" fill="#c9dcee" stroke="#2b2b2b" stroke-width="1"/><path d="M3.6 21.2 q-1.2 2 0 2.4 q1.3 -.4 0-2.4Z" fill="#5b8cc6" stroke="#27456b" stroke-width=".6"/><path d="M12.6 6.8 L17.6 11.8" stroke="#000" stroke-width="3" stroke-linecap="round"/><path d="M16 7.6 C16.6 3.6 19.6 .8 22 2.4 C24.4 4.2 21.6 7.4 18 9Z" fill="#000" stroke="#000" stroke-width="1.4" stroke-linejoin="round"/></svg>
<svg style="left:13.0px;top:682.0px" width="24" height="24" viewBox="0 0 24 24" ><path d="M7.6 8.4 C4.4 9 1.8 12.8 2.8 17.6 C3.4 15.4 5 14.2 5.6 16.4 C6 18.2 7 18 7.2 16 C7.4 12.6 8 10.6 9.6 9.4Z" fill="#8ed19a" stroke="#2d7a3e" stroke-width=".8"/><ellipse cx="11" cy="21.4" rx="10" ry="1.9" fill="#a5dcae" stroke="#2d7a3e" stroke-width=".8"/><path d="M6.6 7 L18.6 1.4 L23.6 12.6 L11.6 18.4Z" fill="url(#gBk)" stroke="#1f3a5c" stroke-width="1"/><ellipse cx="9.1" cy="12.7" rx="2.9" ry="6.3" transform="rotate(-24 9.1 12.7)" fill="#3d6ea3" stroke="#1f3a5c" stroke-width=".9"/><path d="M9.6 2.6 C10.6 6 11.6 9 11.8 11.8" fill="none" stroke="#333" stroke-width=".9"/><circle cx="11.8" cy="12" r="1" fill="#eee" stroke="#333" stroke-width=".6"/></svg>
<div class="sep" style="left:4px;top:717.5px;width:43px;height:1px"></div>
<svg style="left:13.0px;top:730.0px" width="24" height="24" viewBox="0 0 24 24" ><path d="M.6 12.6 C5.4 12.6 6.2 9.6 8 6 C10.4 1.4 16.4 -.2 19.8 2.8 C21.6 4.6 21.4 7.4 19.6 7.8 C20 5.6 18.2 4.2 16.2 5 C13.6 6.2 14.2 10 17.4 12.6 H22.8 V23 H.6Z" fill="url(#gGy)" stroke="#5c5c5c" stroke-width="1"/><path d="M8 6 C10.4 1.4 16.4 -.2 19.8 2.8 C21.6 4.6 21.4 7.4 19.6 7.8 C20 5.6 18.2 4.2 16.2 5" fill="none" stroke="#333" stroke-width="1.3"/></svg>
<svg style="left:13.0px;top:764.0px" width="24" height="24" viewBox="0 0 24 24" ><path d="M11.8 9.6 L20 6.6 C21.6 6.4 22.4 7.4 22.6 8.6 L23.6 21.6 L17.4 23 L11 17.2Z" fill="url(#gCan)" stroke="#2e5c12" stroke-width=".9"/><path d="M13.4 8.8 L18.6 6.8 L18 4.6 L15.2 4 L13 5.6Z" fill="#eaeaea" stroke="#444" stroke-width=".8"/><path d="M12.6 9.4 L19.8 6.8" stroke="#f0b030" stroke-width="1.6"/><g fill="#000"><circle cx="2.6" cy="1.4" r="1"/><circle cx="1.6" cy="6.2" r="1.2"/><circle cx="3.8" cy="11.2" r="1.3"/><circle cx="6.4" cy="4.2" r=".8"/><circle cx="6.6" cy="7.6" r=".9"/><circle cx="8" cy="10" r=".8"/><circle cx="9.4" cy="5.8" r=".7"/><circle cx="9.8" cy="8.2" r=".7"/></g></svg>
<svg style="left:13.0px;top:798.0px" width="24" height="24" viewBox="0 0 24 24" ><path d="M12.6 1.2 L22.4 6.6 L13.2 22.4 L3.4 17Z" fill="#f1b9a3" stroke="#1a1a1a" stroke-width="1"/><path d="M7.6 9.8 L17.4 15.2 L13.2 22.4 L3.4 17Z" fill="#2222e8" stroke="#1a1a1a" stroke-width="1"/><path d="M.6 22.8h6.2M16.6 22.8h7.2" stroke="#1a1a1a" stroke-width="1.1"/></svg>
<svg style="left:13.0px;top:832.0px" width="24" height="24" viewBox="0 0 24 24" ><path d="M14.4 4.6 H20 V17 M7.6 8 L4.6 17.6" fill="none" stroke="#1a1a1a" stroke-width="1"/><rect x="5.8" y="1" width="8.2" height="7.2" fill="url(#gBl)" stroke="#1a1a1a" stroke-width="1"/><rect x=".8" y="16.8" width="8" height="6.8" fill="url(#gBl)" stroke="#1a1a1a" stroke-width="1"/><rect x="15.8" y="16.8" width="8" height="6.8" fill="url(#gBl)" stroke="#1a1a1a" stroke-width="1"/><rect x="9.2" y="10.6" width="7.6" height="4.4" fill="#f7d23e" stroke="#1a1a1a" stroke-width="1"/></svg>
<div class="sep" style="left:4px;top:867.5px;width:43px;height:1px"></div>
<svg style="left:13.0px;top:880.0px" width="24" height="24" viewBox="0 0 24 24" ><path d="M14 14.4 L21.4 21.6" stroke="#7a4a00" stroke-width="5" stroke-linecap="round"/><path d="M14.6 15 L21.2 21.4" stroke="#f5a81c" stroke-width="3.2" stroke-linecap="round"/><circle cx="8.8" cy="9" r="7.6" fill="url(#gLens)" stroke="#1a1a1a" stroke-width="1.3"/></svg>
<svg style="left:13.0px;top:914.0px" width="24" height="24" viewBox="0 0 24 24" ><path d="M2.6 6.4 L13 1 L23.4 18.6 L13 24Z" fill="#f3c3b1" stroke="#1a1a1a" stroke-width="1.1"/><path d="M5 10.4l3.4-1.8M6.8 13.4l2.2-1.2M8.6 16.4l3.4-1.8M10.4 19.4l2.2-1.2M12.2 22l3.2-1.7" stroke="#1a1a1a" stroke-width=".9"/></svg>
<div class="a" style="left:70px;top:174px;width:1498px;height:1164px;background:#fff"></div>
<div class="a" style="left:1568px;top:156px;width:18.5px;height:1200px;background:#efedeb"></div>
<div class="a" style="left:70px;top:1338px;width:1498px;height:18px;background:#efedeb"></div>
<div class="a" style="left:1574.5px;top:529px;width:6px;height:238px;border-radius:3px;background:#cdcdcd"></div>
<div class="a" style="left:599px;top:1343.5px;width:379px;height:6px;border-radius:3px;background:#cdcdcd"></div>
<svg style="left:0;top:0" width="2066" height="1440" viewBox="0 0 2066 1440" shape-rendering="crispEdges"><clipPath id="rclip"><rect x="52" y="155" width="1516" height="1183"/></clipPath><g clip-path="url(#rclip)"><line x1="69" y1="173.5" x2="1568" y2="173.5" stroke="#7e8686" stroke-width="1.2"/><line x1="69.5" y1="156" x2="69.5" y2="173" stroke="#7e8686"/><text x="72.0" y="171" font-size="13.5" fill="#7c8b8f" font-family="Liberation Sans,sans-serif">50</text><line x1="77.5" y1="168" x2="77.5" y2="173" stroke="#7e8686"/><line x1="85.5" y1="168" x2="85.5" y2="173" stroke="#7e8686"/><line x1="94.5" y1="168" x2="94.5" y2="173" stroke="#7e8686"/><line x1="102.5" y1="168" x2="102.5" y2="173" stroke="#7e8686"/><line x1="110.5" y1="164" x2="110.5" y2="173" stroke="#7e8686"/><line x1="118.5" y1="168" x2="118.5" y2="173" stroke="#7e8686"/><line x1="126.5" y1="168" x2="126.5" y2="173" stroke="#7e8686"/><line x1="135.5" y1="168" x2="135.5" y2="173" stroke="#7e8686"/><line x1="143.5" y1="168" x2="143.5" y2="173" stroke="#7e8686"/><line x1="151.5" y1="156" x2="151.5" y2="173" stroke="#7e8686"/><text x="154.0" y="171" font-size="13.5" fill="#7c8b8f" font-family="Liberation Sans,sans-serif">100</text><line x1="159.5" y1="168" x2="159.5" y2="173" stroke="#7e8686"/><line x1="167.5" y1="168" x2="167.5" y2="173" stroke="#7e8686"/><line x1="176.5" y1="168" x2="176.5" y2="173" stroke="#7e8686"/><line x1="184.5" y1="168" x2="184.5" y2="173" stroke="#7e8686"/><line x1="192.5" y1="164" x2="192.5" y2="173" stroke="#7e8686"/><line x1="200.5" y1="168" x2="200.5" y2="173" stroke="#7e8686"/><line x1="208.5" y1="168" x2="208.5" y2="173" stroke="#7e8686"/><line x1="217.5" y1="168" x2="217.5" y2="173" stroke="#7e8686"/><line x1="225.5" y1="168" x2="225.5" y2="173" stroke="#7e8686"/><line x1="233.5" y1="156" x2="233.5" y2="173" stroke="#7e8686"/><text x="236.0" y="171" font-size="13.5" fill="#7c8b8f" font-family="Liberation Sans,sans-serif">150</text><line x1="241.5" y1="168" x2="241.5" y2="173" stroke="#7e8686"/><line x1="249.5" y1="168" x2="249.5" y2="173" stroke="#7e8686"/><line x1="258.5" y1="168" x2="258.5" y2="173" stroke="#7e8686"/><line x1="266.5" y1="168" x2="266.5" y2="173" stroke="#7e8686"/><line x1="274.5" y1="164" x2="274.5" y2="173" stroke="#7e8686"/><line x1="282.5" y1="168" x2="282.5" y2="173" stroke="#7e8686"/><line x1="290.5" y1="168" x2="290.5" y2="173" stroke="#7e8686"/><line x1="299.5" y1="168" x2="299.5" y2="173" stroke="#7e8686"/><line x1="307.5" y1="168" x2="307.5" y2="173" stroke="#7e8686"/><line x1="315.5" y1="156" x2="315.5" y2="173" stroke="#7e8686"/><text x="318.0" y="171" font-size="13.5" fill="#7c8b8f" font-family="Liberation Sans,sans-serif">200</text><line x1="323.5" y1="168" x2="323.5" y2="173" stroke="#7e8686"/><line x1="331.5" y1="168" x2="331.5" y2="173" stroke="#7e8686"/><line x1="340.5" y1="168" x2="340.5" y2="173" stroke="#7e8686"/><line x1="348.5" y1="168" x2="348.5" y2="173" stroke="#7e8686"/><line x1="356.5" y1="164" x2="356.5" y2="173" stroke="#7e8686"/><line x1="364.5" y1="168" x2="364.5" y2="173" stroke="#7e8686"/><line x1="372.5" y1="168" x2="372.5" y2="173" stroke="#7e8686"/><line x1="381.5" y1="168" x2="381.5" y2="173" stroke="#7e8686"/><line x1="389.5" y1="168" x2="389.5" y2="173" stroke="#7e8686"/><line x1="397.5" y1="156" x2="397.5" y2="173" stroke="#7e8686"/><text x="400.0" y="171" font-size="13.5" fill="#7c8b8f" font-family="Liberation Sans,sans-serif">250</text><line x1="405.5" y1="168" x2="405.5" y2="173" stroke="#7e8686"/><line x1="413.5" y1="168" x2="413.5" y2="173" stroke="#7e8686"/><line x1="422.5" y1="168" x2="422.5" y2="173" stroke="#7e8686"/><line x1="430.5" y1="168" x2="430.5" y2="173" stroke="#7e8686"/><line x1="438.5" y1="164" x2="438.5" y2="173" stroke="#7e8686"/><line x1="446.5" y1="168" x2="446.5" y2="173" stroke="#7e8686"/><line x1="454.5" y1="168" x2="454.5" y2="173" stroke="#7e8686"/><line x1="463.5" y1="168" x2="463.5" y2="173" stroke="#7e8686"/><line x1="471.5" y1="168" x2="471.5" y2="173" stroke="#7e8686"/><line x1="479.5" y1="156" x2="479.5" y2="173" stroke="#7e8686"/><text x="482.0" y="171" font-size="13.5" fill="#7c8b8f" font-family="Liberation Sans,sans-serif">300</text><line x1="487.5" y1="168" x2="487.5" y2="173" stroke="#7e8686"/><line x1="496.5" y1="168" x2="496.5" y2="173" stroke="#7e8686"/><line x1="504.5" y1="168" x2="504.5" y2="173" stroke="#7e8686"/><line x1="512.5" y1="168" x2="512.5" y2="173" stroke="#7e8686"/><line x1="520.5" y1="164" x2="520.5" y2="173" stroke="#7e8686"/><line x1="528.5" y1="168" x2="528.5" y2="173" stroke="#7e8686"/><line x1="537.5" y1="168" x2="537.5" y2="173" stroke="#7e8686"/><line x1="545.5" y1="168" x2="545.5" y2="173" stroke="#7e8686"/><line x1="553.5" y1="168" x2="553.5" y2="173" stroke="#7e8686"/><line x1="561.5" y1="156" x2="561.5" y2="173" stroke="#7e8686"/><text x="564.0" y="171" font-size="13.5" fill="#7c8b8f" font-family="Liberation Sans,sans-serif">350</text><line x1="569.5" y1="168" x2="569.5" y2="173" stroke="#7e8686"/><line x1="578.5" y1="168" x2="578.5" y2="173" stroke="#7e8686"/><line x1="586.5" y1="168" x2="586.5" y2="173" stroke="#7e8686"/><line x1="594.5" y1="168" x2="594.5" y2="173" stroke="#7e8686"/><line x1="602.5" y1="164" x2="602.5" y2="173" stroke="#7e8686"/><line x1="610.5" y1="168" x2="610.5" y2="173" stroke="#7e8686"/><line x1="619.5" y1="168" x2="619.5" y2="173" stroke="#7e8686"/><line x1="627.5" y1="168" x2="627.5" y2="173" stroke="#7e8686"/><line x1="635.5" y1="168" x2="635.5" y2="173" stroke="#7e8686"/><line x1="643.5" y1="156" x2="643.5" y2="173" stroke="#7e8686"/><text x="646.0" y="171" font-size="13.5" fill="#7c8b8f" font-family="Liberation Sans,sans-serif">400</text><line x1="651.5" y1="168" x2="651.5" y2="173" stroke="#7e8686"/><line x1="660.5" y1="168" x2="660.5" y2="173" stroke="#7e8686"/><line x1="668.5" y1="168" x2="668.5" y2="173" stroke="#7e8686"/><line x1="676.5" y1="168" x2="676.5" y2="173" stroke="#7e8686"/><line x1="684.5" y1="164" x2="684.5" y2="173" stroke="#7e8686"/><line x1="692.5" y1="168" x2="692.5" y2="173" stroke="#7e8686"/><line x1="701.5" y1="168" x2="701.5" y2="173" stroke="#7e8686"/><line x1="709.5" y1="168" x2="709.5" y2="173" stroke="#7e8686"/><line x1="717.5" y1="168" x2="717.5" y2="173" stroke="#7e8686"/><line x1="725.5" y1="156" x2="725.5" y2="173" stroke="#7e8686"/><text x="728.0" y="171" font-size="13.5" fill="#7c8b8f" font-family="Liberation Sans,sans-serif">450</text><line x1="733.5" y1="168" x2="733.5" y2="173" stroke="#7e8686"/><line x1="742.5" y1="168" x2="742.5" y2="173" stroke="#7e8686"/><line x1="750.5" y1="168" x2="750.5" y2="173" stroke="#7e8686"/><line x1="758.5" y1="168" x2="758.5" y2="173" stroke="#7e8686"/><line x1="766.5" y1="164" x2="766.5" y2="173" stroke="#7e8686"/><line x1="774.5" y1="168" x2="774.5" y2="173" stroke="#7e8686"/><line x1="783.5" y1="168" x2="783.5" y2="173" stroke="#7e8686"/><line x1="791.5" y1="168" x2="791.5" y2="173" stroke="#7e8686"/><line x1="799.5" y1="168" x2="799.5" y2="173" stroke="#7e8686"/><line x1="807.5" y1="156" x2="807.5" y2="173" stroke="#7e8686"/><text x="810.0" y="171" font-size="13.5" fill="#7c8b8f" font-family="Liberation Sans,sans-serif">500</text><line x1="815.5" y1="168" x2="815.5" y2="173" stroke="#7e8686"/><line x1="824.5" y1="168" x2="824.5" y2="173" stroke="#7e8686"/><line x1="832.5" y1="168" x2="832.5" y2="173" stroke="#7e8686"/><line x1="840.5" y1="168" x2="840.5" y2="173" stroke="#7e8686"/><line x1="848.5" y1="164" x2="848.5" y2="173" stroke="#7e8686"/><line x1="856.5" y1="168" x2="856.5" y2="173" stroke="#7e8686"/><line x1="865.5" y1="168" x2="865.5" y2="173" stroke="#7e8686"/><line x1="873.5" y1="168" x2="873.5" y2="173" stroke="#7e8686"/><line x1="881.5" y1="168" x2="881.5" y2="173" stroke="#7e8686"/><line x1="889.5" y1="156" x2="889.5" y2="173" stroke="#7e8686"/><text x="892.0" y="171" font-size="13.5" fill="#7c8b8f" font-family="Liberation Sans,sans-serif">550</text><line x1="897.5" y1="168" x2="897.5" y2="173" stroke="#7e8686"/><line x1="906.5" y1="168" x2="906.5" y2="173" stroke="#7e8686"/><line x1="914.5" y1="168" x2="914.5" y2="173" stroke="#7e8686"/><line x1="922.5" y1="168" x2="922.5" y2="173" stroke="#7e8686"/><line x1="930.5" y1="164" x2="930.5" y2="173" stroke="#7e8686"/><line x1="938.5" y1="168" x2="938.5" y2="173" stroke="#7e8686"/><line x1="947.5" y1="168" x2="947.5" y2="173" stroke="#7e8686"/><line x1="955.5" y1="168" x2="955.5" y2="173" stroke="#7e8686"/><line x1="963.5" y1="168" x2="963.5" y2="173" stroke="#7e8686"/><line x1="971.5" y1="156" x2="971.5" y2="173" stroke="#7e8686"/><text x="974.0" y="171" font-size="13.5" fill="#7c8b8f" font-family="Liberation Sans,sans-serif">600</text><line x1="979.5" y1="168" x2="979.5" y2="173" stroke="#7e8686"/><line x1="988.5" y1="168" x2="988.5" y2="173" stroke="#7e8686"/><line x1="996.5" y1="168" x2="996.5" y2="173" stroke="#7e8686"/><line x1="1004.5" y1="168" x2="1004.5" y2="173" stroke="#7e8686"/><line x1="1012.5" y1="164" x2="1012.5" y2="173" stroke="#7e8686"/><line x1="1020.5" y1="168" x2="1020.5" y2="173" stroke="#7e8686"/><line x1="1029.5" y1="168" x2="1029.5" y2="173" stroke="#7e8686"/><line x1="1037.5" y1="168" x2="1037.5" y2="173" stroke="#7e8686"/><line x1="1045.5" y1="168" x2="1045.5" y2="173" stroke="#7e8686"/><line x1="1053.5" y1="156" x2="1053.5" y2="173" stroke="#7e8686"/><text x="1056.0" y="171" font-size="13.5" fill="#7c8b8f" font-family="Liberation Sans,sans-serif">650</text><line x1="1061.5" y1="168" x2="1061.5" y2="173" stroke="#7e8686"/><line x1="1070.5" y1="168" x2="1070.5" y2="173" stroke="#7e8686"/><line x1="1078.5" y1="168" x2="1078.5" y2="173" stroke="#7e8686"/><line x1="1086.5" y1="168" x2="1086.5" y2="173" stroke="#7e8686"/><line x1="1094.5" y1="164" x2="1094.5" y2="173" stroke="#7e8686"/><line x1="1102.5" y1="168" x2="1102.5" y2="173" stroke="#7e8686"/><line x1="1111.5" y1="168" x2="1111.5" y2="173" stroke="#7e8686"/><line x1="1119.5" y1="168" x2="1119.5" y2="173" stroke="#7e8686"/><line x1="1127.5" y1="168" x2="1127.5" y2="173" stroke="#7e8686"/><line x1="1135.5" y1="156" x2="1135.5" y2="173" stroke="#7e8686"/><text x="1138.0" y="171" font-size="13.5" fill="#7c8b8f" font-family="Liberation Sans,sans-serif">700</text><line x1="1144.5" y1="168" x2="1144.5" y2="173" stroke="#7e8686"/><line x1="1152.5" y1="168" x2="1152.5" y2="173" stroke="#7e8686"/><line x1="1160.5" y1="168" x2="1160.5" y2="173" stroke="#7e8686"/><line x1="1168.5" y1="168" x2="1168.5" y2="173" stroke="#7e8686"/><line x1="1176.5" y1="164" x2="1176.5" y2="173" stroke="#7e8686"/><line x1="1185.5" y1="168" x2="1185.5" y2="173" stroke="#7e8686"/><line x1="1193.5" y1="168" x2="1193.5" y2="173" stroke="#7e8686"/><line x1="1201.5" y1="168" x2="1201.5" y2="173" stroke="#7e8686"/><line x1="1209.5" y1="168" x2="1209.5" y2="173" stroke="#7e8686"/><line x1="1217.5" y1="156" x2="1217.5" y2="173" stroke="#7e8686"/><text x="1220.0" y="171" font-size="13.5" fill="#7c8b8f" font-family="Liberation Sans,sans-serif">750</text><line x1="1226.5" y1="168" x2="1226.5" y2="173" stroke="#7e8686"/><line x1="1234.5" y1="168" x2="1234.5" y2="173" stroke="#7e8686"/><line x1="1242.5" y1="168" x2="1242.5" y2="173" stroke="#7e8686"/><line x1="1250.5" y1="168" x2="1250.5" y2="173" stroke="#7e8686"/><line x1="1258.5" y1="164" x2="1258.5" y2="173" stroke="#7e8686"/><line x1="1267.5" y1="168" x2="1267.5" y2="173" stroke="#7e8686"/><line x1="1275.5" y1="168" x2="1275.5" y2="173" stroke="#7e8686"/><line x1="1283.5" y1="168" x2="1283.5" y2="173" stroke="#7e8686"/><line x1="1291.5" y1="168" x2="1291.5" y2="173" stroke="#7e8686"/><line x1="1299.5" y1="156" x2="1299.5" y2="173" stroke="#7e8686"/><text x="1302.0" y="171" font-size="13.5" fill="#7c8b8f" font-family="Liberation Sans,sans-serif">800</text><line x1="1308.5" y1="168" x2="1308.5" y2="173" stroke="#7e8686"/><line x1="1316.5" y1="168" x2="1316.5" y2="173" stroke="#7e8686"/><line x1="1324.5" y1="168" x2="1324.5" y2="173" stroke="#7e8686"/><line x1="1332.5" y1="168" x2="1332.5" y2="173" stroke="#7e8686"/><line x1="1340.5" y1="164" x2="1340.5" y2="173" stroke="#7e8686"/><line x1="1349.5" y1="168" x2="1349.5" y2="173" stroke="#7e8686"/><line x1="1357.5" y1="168" x2="1357.5" y2="173" stroke="#7e8686"/><line x1="1365.5" y1="168" x2="1365.5" y2="173" stroke="#7e8686"/><line x1="1373.5" y1="168" x2="1373.5" y2="173" stroke="#7e8686"/><line x1="1381.5" y1="156" x2="1381.5" y2="173" stroke="#7e8686"/><text x="1384.0" y="171" font-size="13.5" fill="#7c8b8f" font-family="Liberation Sans,sans-serif">850</text><line x1="1390.5" y1="168" x2="1390.5" y2="173" stroke="#7e8686"/><line x1="1398.5" y1="168" x2="1398.5" y2="173" stroke="#7e8686"/><line x1="1406.5" y1="168" x2="1406.5" y2="173" stroke="#7e8686"/><line x1="1414.5" y1="168" x2="1414.5" y2="173" stroke="#7e8686"/><line x1="1422.5" y1="164" x2="1422.5" y2="173" stroke="#7e8686"/><line x1="1431.5" y1="168" x2="1431.5" y2="173" stroke="#7e8686"/><line x1="1439.5" y1="168" x2="1439.5" y2="173" stroke="#7e8686"/><line x1="1447.5" y1="168" x2="1447.5" y2="173" stroke="#7e8686"/><line x1="1455.5" y1="168" x2="1455.5" y2="173" stroke="#7e8686"/><line x1="1463.5" y1="156" x2="1463.5" y2="173" stroke="#7e8686"/><text x="1466.0" y="171" font-size="13.5" fill="#7c8b8f" font-family="Liberation Sans,sans-serif">900</text><line x1="1472.5" y1="168" x2="1472.5" y2="173" stroke="#7e8686"/><line x1="1480.5" y1="168" x2="1480.5" y2="173" stroke="#7e8686"/><line x1="1488.5" y1="168" x2="1488.5" y2="173" stroke="#7e8686"/><line x1="1496.5" y1="168" x2="1496.5" y2="173" stroke="#7e8686"/><line x1="1504.5" y1="164" x2="1504.5" y2="173" stroke="#7e8686"/><line x1="1513.5" y1="168" x2="1513.5" y2="173" stroke="#7e8686"/><line x1="1521.5" y1="168" x2="1521.5" y2="173" stroke="#7e8686"/><line x1="1529.5" y1="168" x2="1529.5" y2="173" stroke="#7e8686"/><line x1="1537.5" y1="168" x2="1537.5" y2="173" stroke="#7e8686"/><line x1="1545.5" y1="156" x2="1545.5" y2="173" stroke="#7e8686"/><text x="1548.0" y="171" font-size="13.5" fill="#7c8b8f" font-family="Liberation Sans,sans-serif">950</text><line x1="1554.5" y1="168" x2="1554.5" y2="173" stroke="#7e8686"/><line x1="1562.5" y1="168" x2="1562.5" y2="173" stroke="#7e8686"/><line x1="69.5" y1="173" x2="69.5" y2="1338" stroke="#7e8686" stroke-width="1.2"/><line x1="64" y1="174.5" x2="69" y2="174.5" stroke="#7e8686"/><line x1="64" y1="182.5" x2="69" y2="182.5" stroke="#7e8686"/><line x1="64" y1="190.5" x2="69" y2="190.5" stroke="#7e8686"/><line x1="60" y1="198.5" x2="69" y2="198.5" stroke="#7e8686"/><line x1="64" y1="207.5" x2="69" y2="207.5" stroke="#7e8686"/><line x1="64" y1="215.5" x2="69" y2="215.5" stroke="#7e8686"/><line x1="64" y1="223.5" x2="69" y2="223.5" stroke="#7e8686"/><line x1="64" y1="231.5" x2="69" y2="231.5" stroke="#7e8686"/><line x1="52" y1="239.5" x2="69" y2="239.5" stroke="#7e8686"/><text x="59.5" y="253.0" text-anchor="middle" font-size="13.5" fill="#7c8b8f" font-family="Liberation Sans,sans-serif">-</text><text x="59.5" y="265.5" text-anchor="middle" font-size="13.5" fill="#7c8b8f" font-family="Liberation Sans,sans-serif">5</text><text x="59.5" y="278.0" text-anchor="middle" font-size="13.5" fill="#7c8b8f" font-family="Liberation Sans,sans-serif">0</text><line x1="64" y1="248.5" x2="69" y2="248.5" stroke="#7e8686"/><line x1="64" y1="256.5" x2="69" y2="256.5" stroke="#7e8686"/><line x1="64" y1="264.5" x2="69" y2="264.5" stroke="#7e8686"/><line x1="64" y1="272.5" x2="69" y2="272.5" stroke="#7e8686"/><line x1="60" y1="280.5" x2="69" y2="280.5" stroke="#7e8686"/><line x1="64" y1="289.5" x2="69" y2="289.5" stroke="#7e8686"/><line x1="64" y1="297.5" x2="69" y2="297.5" stroke="#7e8686"/><line x1="64" y1="305.5" x2="69" y2="305.5" stroke="#7e8686"/><line x1="64" y1="313.5" x2="69" y2="313.5" stroke="#7e8686"/><line x1="52" y1="322.5" x2="69" y2="322.5" stroke="#7e8686"/><text x="59.5" y="336.0" text-anchor="middle" font-size="13.5" fill="#7c8b8f" font-family="Liberation Sans,sans-serif">0</text><line x1="64" y1="330.5" x2="69" y2="330.5" stroke="#7e8686"/><line x1="64" y1="338.5" x2="69" y2="338.5" stroke="#7e8686"/><line x1="64" y1="346.5" x2="69" y2="346.5" stroke="#7e8686"/><line x1="64" y1="354.5" x2="69" y2="354.5" stroke="#7e8686"/><line x1="60" y1="363.5" x2="69" y2="363.5" stroke="#7e8686"/><line x1="64" y1="371.5" x2="69" y2="371.5" stroke="#7e8686"/><line x1="64" y1="379.5" x2="69" y2="379.5" stroke="#7e8686"/><line x1="64" y1="387.5" x2="69" y2="387.5" stroke="#7e8686"/><line x1="64" y1="395.5" x2="69" y2="395.5" stroke="#7e8686"/><line x1="52" y1="404.5" x2="69" y2="404.5" stroke="#7e8686"/><text x="59.5" y="418.0" text-anchor="middle" font-size="13.5" fill="#7c8b8f" font-family="Liberation Sans,sans-serif">5</text><text x="59.5" y="430.5" text-anchor="middle" font-size="13.5" fill="#7c8b8f" font-family="Liberation Sans,sans-serif">0</text><line x1="64" y1="412.5" x2="69" y2="412.5" stroke="#7e8686"/><line x1="64" y1="420.5" x2="69" y2="420.5" stroke="#7e8686"/><line x1="64" y1="428.5" x2="69" y2="428.5" stroke="#7e8686"/><line x1="64" y1="436.5" x2="69" y2="436.5" stroke="#7e8686"/><line x1="60" y1="445.5" x2="69" y2="445.5" stroke="#7e8686"/><line x1="64" y1="453.5" x2="69" y2="453.5" stroke="#7e8686"/><line x1="64" y1="461.5" x2="69" y2="461.5" stroke="#7e8686"/><line x1="64" y1="469.5" x2="69" y2="469.5" stroke="#7e8686"/><line x1="64" y1="477.5" x2="69" y2="477.5" stroke="#7e8686"/><line x1="52" y1="486.5" x2="69" y2="486.5" stroke="#7e8686"/><text x="59.5" y="500.0" text-anchor="middle" font-size="13.5" fill="#7c8b8f" font-family="Liberation Sans,sans-serif">1</text><text x="59.5" y="512.5" text-anchor="middle" font-size="13.5" fill="#7c8b8f" font-family="Liberation Sans,sans-serif">0</text><text x="59.5" y="525.0" text-anchor="middle" font-size="13.5" fill="#7c8b8f" font-family="Liberation Sans,sans-serif">0</text><line x1="64" y1="494.5" x2="69" y2="494.5" stroke="#7e8686"/><line x1="64" y1="502.5" x2="69" y2="502.5" stroke="#7e8686"/><line x1="64" y1="510.5" x2="69" y2="510.5" stroke="#7e8686"/><line x1="64" y1="518.5" x2="69" y2="518.5" stroke="#7e8686"/><line x1="60" y1="527.5" x2="69" y2="527.5" stroke="#7e8686"/><line x1="64" y1="535.5" x2="69" y2="535.5" stroke="#7e8686"/><line x1="64" y1="543.5" x2="69" y2="543.5" stroke="#7e8686"/><line x1="64" y1="551.5" x2="69" y2="551.5" stroke="#7e8686"/><line x1="64" y1="559.5" x2="69" y2="559.5" stroke="#7e8686"/><line x1="52" y1="568.5" x2="69" y2="568.5" stroke="#7e8686"/><text x="59.5" y="582.0" text-anchor="middle" font-size="13.5" fill="#7c8b8f" font-family="Liberation Sans,sans-serif">1</text><text x="59.5" y="594.5" text-anchor="middle" font-size="13.5" fill="#7c8b8f" font-family="Liberation Sans,sans-serif">5</text><text x="59.5" y="607.0" text-anchor="middle" font-size="13.5" fill="#7c8b8f" font-family="Liberation Sans,sans-serif">0</text><line x1="64" y1="576.5" x2="69" y2="576.5" stroke="#7e8686"/><line x1="64" y1="584.5" x2="69" y2="584.5" stroke="#7e8686"/><line x1="64" y1="592.5" x2="69" y2="592.5" stroke="#7e8686"/><line x1="64" y1="600.5" x2="69" y2="600.5" stroke="#7e8686"/><line x1="60" y1="609.5" x2="69" y2="609.5" stroke="#7e8686"/><line x1="64" y1="617.5" x2="69" y2="617.5" stroke="#7e8686"/><line x1="64" y1="625.5" x2="69" y2="625.5" stroke="#7e8686"/><line x1="64" y1="633.5" x2="69" y2="633.5" stroke="#7e8686"/><line x1="64" y1="641.5" x2="69" y2="641.5" stroke="#7e8686"/><line x1="52" y1="650.5" x2="69" y2="650.5" stroke="#7e8686"/><text x="59.5" y="664.0" text-anchor="middle" font-size="13.5" fill="#7c8b8f" font-family="Liberation Sans,sans-serif">2</text><text x="59.5" y="676.5" text-anchor="middle" font-size="13.5" fill="#7c8b8f" font-family="Liberation Sans,sans-serif">0</text><text x="59.5" y="689.0" text-anchor="middle" font-size="13.5" fill="#7c8b8f" font-family="Liberation Sans,sans-serif">0</text><line x1="64" y1="658.5" x2="69" y2="658.5" stroke="#7e8686"/><line x1="64" y1="666.5" x2="69" y2="666.5" stroke="#7e8686"/><line x1="64" y1="674.5" x2="69" y2="674.5" stroke="#7e8686"/><line x1="64" y1="682.5" x2="69" y2="682.5" stroke="#7e8686"/><line x1="60" y1="691.5" x2="69" y2="691.5" stroke="#7e8686"/><line x1="64" y1="699.5" x2="69" y2="699.5" stroke="#7e8686"/><line x1="64" y1="707.5" x2="69" y2="707.5" stroke="#7e8686"/><line x1="64" y1="715.5" x2="69" y2="715.5" stroke="#7e8686"/><line x1="64" y1="723.5" x2="69" y2="723.5" stroke="#7e8686"/><line x1="52" y1="732.5" x2="69" y2="732.5" stroke="#7e8686"/><text x="59.5" y="746.0" text-anchor="middle" font-size="13.5" fill="#7c8b8f" font-family="Liberation Sans,sans-serif">2</text><text x="59.5" y="758.5" text-anchor="middle" font-size="13.5" fill="#7c8b8f" font-family="Liberation Sans,sans-serif">5</text><text x="59.5" y="771.0" text-anchor="middle" font-size="13.5" fill="#7c8b8f" font-family="Liberation Sans,sans-serif">0</text><line x1="64" y1="740.5" x2="69" y2="740.5" stroke="#7e8686"/><line x1="64" y1="748.5" x2="69" y2="748.5" stroke="#7e8686"/><line x1="64" y1="756.5" x2="69" y2="756.5" stroke="#7e8686"/><line x1="64" y1="764.5" x2="69" y2="764.5" stroke="#7e8686"/><line x1="60" y1="773.5" x2="69" y2="773.5" stroke="#7e8686"/><line x1="64" y1="781.5" x2="69" y2="781.5" stroke="#7e8686"/><line x1="64" y1="789.5" x2="69" y2="789.5" stroke="#7e8686"/><line x1="64" y1="797.5" x2="69" y2="797.5" stroke="#7e8686"/><line x1="64" y1="805.5" x2="69" y2="805.5" stroke="#7e8686"/><line x1="52" y1="814.5" x2="69" y2="814.5" stroke="#7e8686"/><text x="59.5" y="828.0" text-anchor="middle" font-size="13.5" fill="#7c8b8f" font-family="Liberation Sans,sans-serif">3</text><text x="59.5" y="840.5" text-anchor="middle" font-size="13.5" fill="#7c8b8f" font-family="Liberation Sans,sans-serif">0</text><text x="59.5" y="853.0" text-anchor="middle" font-size="13.5" fill="#7c8b8f" font-family="Liberation Sans,sans-serif">0</text><line x1="64" y1="822.5" x2="69" y2="822.5" stroke="#7e8686"/><line x1="64" y1="830.5" x2="69" y2="830.5" stroke="#7e8686"/><line x1="64" y1="838.5" x2="69" y2="838.5" stroke="#7e8686"/><line x1="64" y1="846.5" x2="69" y2="846.5" stroke="#7e8686"/><line x1="60" y1="855.5" x2="69" y2="855.5" stroke="#7e8686"/><line x1="64" y1="863.5" x2="69" y2="863.5" stroke="#7e8686"/><line x1="64" y1="871.5" x2="69" y2="871.5" stroke="#7e8686"/><line x1="64" y1="879.5" x2="69" y2="879.5" stroke="#7e8686"/><line x1="64" y1="887.5" x2="69" y2="887.5" stroke="#7e8686"/><line x1="52" y1="896.5" x2="69" y2="896.5" stroke="#7e8686"/><text x="59.5" y="910.0" text-anchor="middle" font-size="13.5" fill="#7c8b8f" font-family="Liberation Sans,sans-serif">3</text><text x="59.5" y="922.5" text-anchor="middle" font-size="13.5" fill="#7c8b8f" font-family="Liberation Sans,sans-serif">5</text><text x="59.5" y="935.0" text-anchor="middle" font-size="13.5" fill="#7c8b8f" font-family="Liberation Sans,sans-serif">0</text><line x1="64" y1="904.5" x2="69" y2="904.5" stroke="#7e8686"/><line x1="64" y1="912.5" x2="69" y2="912.5" stroke="#7e8686"/><line x1="64" y1="920.5" x2="69" y2="920.5" stroke="#7e8686"/><line x1="64" y1="928.5" x2="69" y2="928.5" stroke="#7e8686"/><line x1="60" y1="937.5" x2="69" y2="937.5" stroke="#7e8686"/><line x1="64" y1="945.5" x2="69" y2="945.5" stroke="#7e8686"/><line x1="64" y1="953.5" x2="69" y2="953.5" stroke="#7e8686"/><line x1="64" y1="961.5" x2="69" y2="961.5" stroke="#7e8686"/><line x1="64" y1="969.5" x2="69" y2="969.5" stroke="#7e8686"/><line x1="52" y1="978.5" x2="69" y2="978.5" stroke="#7e8686"/><text x="59.5" y="992.0" text-anchor="middle" font-size="13.5" fill="#7c8b8f" font-family="Liberation Sans,sans-serif">4</text><text x="59.5" y="1004.5" text-anchor="middle" font-size="13.5" fill="#7c8b8f" font-family="Liberation Sans,sans-serif">0</text><text x="59.5" y="1017.0" text-anchor="middle" font-size="13.5" fill="#7c8b8f" font-family="Liberation Sans,sans-serif">0</text><line x1="64" y1="986.5" x2="69" y2="986.5" stroke="#7e8686"/><line x1="64" y1="994.5" x2="69" y2="994.5" stroke="#7e8686"/><line x1="64" y1="1002.5" x2="69" y2="1002.5" stroke="#7e8686"/><line x1="64" y1="1011.5" x2="69" y2="1011.5" stroke="#7e8686"/><line x1="60" y1="1019.5" x2="69" y2="1019.5" stroke="#7e8686"/><line x1="64" y1="1027.5" x2="69" y2="1027.5" stroke="#7e8686"/><line x1="64" y1="1035.5" x2="69" y2="1035.5" stroke="#7e8686"/><line x1="64" y1="1043.5" x2="69" y2="1043.5" stroke="#7e8686"/><line x1="64" y1="1052.5" x2="69" y2="1052.5" stroke="#7e8686"/><line x1="52" y1="1060.5" x2="69" y2="1060.5" stroke="#7e8686"/><text x="59.5" y="1074.0" text-anchor="middle" font-size="13.5" fill="#7c8b8f" font-family="Liberation Sans,sans-serif">4</text><text x="59.5" y="1086.5" text-anchor="middle" font-size="13.5" fill="#7c8b8f" font-family="Liberation Sans,sans-serif">5</text><text x="59.5" y="1099.0" text-anchor="middle" font-size="13.5" fill="#7c8b8f" font-family="Liberation Sans,sans-serif">0</text><line x1="64" y1="1068.5" x2="69" y2="1068.5" stroke="#7e8686"/><line x1="64" y1="1076.5" x2="69" y2="1076.5" stroke="#7e8686"/><line x1="64" y1="1084.5" x2="69" y2="1084.5" stroke="#7e8686"/><line x1="64" y1="1093.5" x2="69" y2="1093.5" stroke="#7e8686"/><line x1="60" y1="1101.5" x2="69" y2="1101.5" stroke="#7e8686"/><line x1="64" y1="1109.5" x2="69" y2="1109.5" stroke="#7e8686"/><line x1="64" y1="1117.5" x2="69" y2="1117.5" stroke="#7e8686"/><line x1="64" y1="1125.5" x2="69" y2="1125.5" stroke="#7e8686"/><line x1="64" y1="1134.5" x2="69" y2="1134.5" stroke="#7e8686"/><line x1="52" y1="1142.5" x2="69" y2="1142.5" stroke="#7e8686"/><text x="59.5" y="1156.0" text-anchor="middle" font-size="13.5" fill="#7c8b8f" font-family="Liberation Sans,sans-serif">5</text><text x="59.5" y="1168.5" text-anchor="middle" font-size="13.5" fill="#7c8b8f" font-family="Liberation Sans,sans-serif">0</text><text x="59.5" y="1181.0" text-anchor="middle" font-size="13.5" fill="#7c8b8f" font-family="Liberation Sans,sans-serif">0</text><line x1="64" y1="1150.5" x2="69" y2="1150.5" stroke="#7e8686"/><line x1="64" y1="1158.5" x2="69" y2="1158.5" stroke="#7e8686"/><line x1="64" y1="1166.5" x2="69" y2="1166.5" stroke="#7e8686"/><line x1="64" y1="1175.5" x2="69" y2="1175.5" stroke="#7e8686"/><line x1="60" y1="1183.5" x2="69" y2="1183.5" stroke="#7e8686"/><line x1="64" y1="1191.5" x2="69" y2="1191.5" stroke="#7e8686"/><line x1="64" y1="1199.5" x2="69" y2="1199.5" stroke="#7e8686"/><line x1="64" y1="1207.5" x2="69" y2="1207.5" stroke="#7e8686"/><line x1="64" y1="1216.5" x2="69" y2="1216.5" stroke="#7e8686"/><line x1="52" y1="1224.5" x2="69" y2="1224.5" stroke="#7e8686"/><text x="59.5" y="1238.0" text-anchor="middle" font-size="13.5" fill="#7c8b8f" font-family="Liberation Sans,sans-serif">5</text><text x="59.5" y="1250.5" text-anchor="middle" font-size="13.5" fill="#7c8b8f" font-family="Liberation Sans,sans-serif">5</text><text x="59.5" y="1263.0" text-anchor="middle" font-size="13.5" fill="#7c8b8f" font-family="Liberation Sans,sans-serif">0</text><line x1="64" y1="1232.5" x2="69" y2="1232.5" stroke="#7e8686"/><line x1="64" y1="1240.5" x2="69" y2="1240.5" stroke="#7e8686"/><line x1="64" y1="1248.5" x2="69" y2="1248.5" stroke="#7e8686"/><line x1="64" y1="1257.5" x2="69" y2="1257.5" stroke="#7e8686"/><line x1="60" y1="1265.5" x2="69" y2="1265.5" stroke="#7e8686"/><line x1="64" y1="1273.5" x2="69" y2="1273.5" stroke="#7e8686"/><line x1="64" y1="1281.5" x2="69" y2="1281.5" stroke="#7e8686"/><line x1="64" y1="1289.5" x2="69" y2="1289.5" stroke="#7e8686"/><line x1="64" y1="1298.5" x2="69" y2="1298.5" stroke="#7e8686"/><line x1="52" y1="1306.5" x2="69" y2="1306.5" stroke="#7e8686"/><text x="59.5" y="1320.0" text-anchor="middle" font-size="13.5" fill="#7c8b8f" font-family="Liberation Sans,sans-serif">6</text><text x="59.5" y="1332.5" text-anchor="middle" font-size="13.5" fill="#7c8b8f" font-family="Liberation Sans,sans-serif">0</text><text x="59.5" y="1345.0" text-anchor="middle" font-size="13.5" fill="#7c8b8f" font-family="Liberation Sans,sans-serif">0</text><line x1="64" y1="1314.5" x2="69" y2="1314.5" stroke="#7e8686"/><line x1="64" y1="1322.5" x2="69" y2="1322.5" stroke="#7e8686"/><line x1="64" y1="1330.5" x2="69" y2="1330.5" stroke="#7e8686"/><path d="M439 167.5h8l-4 5z" fill="#9ea3a3"/><path d="M64.5 524.5v8l5-4z" fill="#9ea3a3"/></g></svg>
<div class="a" style="left:52.5px;top:156px;width:17px;height:17.5px;background:#f6f5f4;border:1px solid #ddd9d5;border-radius:4px"></div>
<svg style="left:54.0px;top:158.0px" width="14" height="14" viewBox="0 0 16 16" ><path d="M4.3 8V5.4a3.7 3.7 0 0 1 7.4 0V8" fill="none" stroke="#1f1f1f" stroke-width="1.9"/><rect x="1.6" y="7.4" width="12.8" height="8" rx="1.2" fill="url(#gLk)" stroke="#1f1f1f" stroke-width="1.2"/><circle cx="8" cy="10.6" r="1.2" fill="#111"/><path d="M8 10.6v2.6" stroke="#111" stroke-width="1.2"/></svg>
<div class="a" style="left:1569.5px;top:157.5px;width:15px;height:15px;background:#f9f9f8;border:1px solid #c9c6c2;border-radius:3px"></div>
<svg style="left:1573px;top:160.5px" width="8" height="9" viewBox="0 0 8 9"><path d="M2.5 2 L5 .8 V8 M2.5 8h5" fill="none" stroke="#8a8d8e" stroke-width="1"/></svg>
<div class="a" style="left:70px;top:322px;width:1498px;height:1.4px;background:#5f5f5f"></div>
<svg style="left:0;top:0" width="2066" height="1440" viewBox="0 0 2066 1440"><path d="M79.8 516.6C79.7 513.9 79.9 512.7 80.0 511.0C80.1 509.4 79.6 509.5 80.4 508.2C81.2 507.0 80.7 506.6 83.9 505.0C87.1 503.4 88.2 501.9 96.2 500.2C104.3 498.5 111.6 497.8 124.2 496.3C136.7 494.8 146.5 494.6 158.9 492.8C171.3 491.0 176.0 489.5 186.1 487.4C196.2 485.2 200.5 484.4 209.5 482.1C218.5 479.8 223.6 478.2 231.2 475.8C238.8 473.4 242.0 473.3 247.5 470.0C253.0 466.7 254.6 464.6 258.8 459.4C263.1 454.3 265.4 449.6 268.9 444.3C272.4 439.0 273.4 439.0 276.5 433.0C279.5 427.0 280.5 419.7 284.0 414.1C287.5 408.6 289.5 409.1 294.1 405.3C298.6 401.5 299.6 399.3 306.7 395.2C313.7 391.2 320.8 388.3 329.3 385.2C337.9 382.0 340.4 381.1 349.4 379.6C358.5 378.1 359.5 378.0 374.6 377.6C389.7 377.2 407.3 377.2 425.0 377.6C442.6 378.0 449.6 378.4 462.7 379.6C475.8 380.9 481.8 381.0 490.4 383.9C499.0 386.8 499.5 389.2 505.5 394.0C511.5 398.8 514.1 401.5 520.6 407.8C527.1 414.1 532.7 418.9 538.2 425.4C543.8 432.0 544.4 433.4 548.3 440.5C552.1 447.6 553.2 449.9 557.4 460.9C561.7 472.0 564.7 481.1 569.6 495.8C574.5 510.4 576.6 518.8 581.8 534.1C587.0 549.4 590.5 557.8 595.8 572.4C601.0 587.1 603.1 595.4 608.0 607.3C612.8 619.1 614.2 621.9 620.2 631.7C626.1 641.4 629.9 647.0 637.6 656.1C645.2 665.1 650.1 670.4 658.5 677.0C666.9 683.6 669.6 684.2 679.4 689.2C689.2 694.2 696.8 698.4 707.3 702.1C717.7 705.8 720.5 705.3 731.7 707.6C742.8 709.9 751.2 711.5 763.0 713.6C774.9 715.7 779.8 716.7 790.9 718.1C802.1 719.5 806.3 719.1 818.8 720.5C831.3 721.9 832.7 723.8 853.6 725.1C874.6 726.3 895.5 726.7 923.3 726.8C951.2 727.0 970.0 726.2 993.0 725.8C1016.1 725.4 1020.9 725.9 1038.4 724.7C1055.8 723.5 1064.1 721.7 1080.2 719.8C1096.2 718.0 1102.5 716.9 1118.5 715.3C1134.5 713.7 1147.1 712.9 1160.3 711.8C1173.6 710.8 1170.8 709.7 1184.7 710.1C1198.7 710.4 1215.0 712.0 1230.0 713.6C1245.1 715.1 1250.2 716.1 1260.0 717.8C1269.8 719.4 1269.4 719.3 1278.8 721.9C1288.3 724.5 1297.0 729.5 1307.2 730.9C1317.3 732.2 1320.3 730.1 1329.6 728.5C1338.8 726.8 1344.5 725.8 1353.5 722.5C1362.4 719.2 1366.0 716.8 1374.4 712.0C1382.7 707.3 1387.5 704.9 1395.3 698.6C1403.0 692.3 1407.2 687.9 1413.2 680.7C1419.2 673.5 1421.0 669.9 1425.1 662.8C1429.3 655.6 1431.2 652.0 1434.1 644.9C1437.0 637.7 1438.0 635.9 1439.5 626.9C1441.0 618.0 1440.4 610.2 1441.6 600.1C1442.8 589.9 1444.4 585.7 1445.4 576.2C1446.5 566.6 1446.8 561.2 1446.9 552.3C1447.1 543.3 1446.8 539.2 1446.0 531.4C1445.3 523.6 1444.5 521.2 1443.1 513.5C1441.6 505.7 1440.4 500.6 1438.6 492.6C1436.8 484.5 1436.2 480.0 1434.1 473.2C1432.0 466.3 1431.1 464.5 1428.1 458.2C1425.1 452.0 1422.0 447.3 1419.2 441.8C1416.4 436.3 1414.7 433.4 1414.1 430.8C1413.5 428.1 1414.0 428.1 1416.2 428.4C1418.4 428.7 1420.4 429.3 1425.1 432.2C1429.9 435.2 1434.1 438.1 1440.1 443.3C1446.0 448.5 1449.6 452.6 1455.0 458.2C1460.4 463.9 1464.1 471.4 1466.9 471.7C1469.8 472.0 1468.1 464.2 1469.3 459.7C1470.5 455.2 1471.3 453.2 1472.9 449.3C1474.5 445.4 1475.7 440.9 1477.4 440.3C1479.1 439.7 1479.8 443.0 1481.3 446.3C1482.8 449.6 1483.0 449.9 1484.9 456.7C1486.8 463.6 1488.1 472.0 1490.8 480.6C1493.5 489.3 1495.6 495.1 1498.3 500.0C1501.0 504.9 1501.9 505.1 1504.3 505.1C1506.7 505.1 1507.9 498.7 1510.2 500.0C1512.6 501.4 1514.1 506.9 1516.2 512.0C1518.3 517.1 1518.0 520.3 1520.7 525.4C1523.4 530.5 1526.7 532.0 1529.7 537.4C1532.6 542.7 1533.8 545.7 1535.6 552.3C1537.4 558.9 1537.5 562.4 1538.6 570.2C1539.7 578.0 1539.7 585.1 1541.0 591.1C1542.3 597.1 1544.2 595.3 1545.2 600.1C1546.2 604.8 1546.5 609.0 1546.1 615.0C1545.7 621.0 1544.6 624.0 1543.1 629.9C1541.6 635.9 1540.0 639.8 1538.6 644.9C1537.2 649.9 1536.2 652.3 1536.2 655.3C1536.2 658.3 1537.2 659.5 1538.6 659.8C1540.0 660.1 1540.7 659.2 1543.1 656.8C1545.5 654.4 1548.0 651.1 1550.6 647.8C1553.1 644.6 1554.6 639.2 1555.9 640.4C1557.3 641.6 1557.9 648.1 1557.4 653.8C1556.9 659.5 1555.5 662.8 1553.5 668.8C1551.6 674.7 1550.6 676.5 1547.6 683.7C1544.6 690.8 1541.9 697.4 1538.6 704.6C1535.3 711.7 1532.9 713.7 1531.1 719.5C1529.4 725.4 1531.4 729.8 1529.7 733.8C1527.9 737.9 1526.1 737.3 1522.2 739.8C1518.3 742.3 1515.3 744.6 1510.2 746.4C1505.2 748.2 1500.6 747.7 1496.8 748.8C1493.0 749.9 1492.3 750.3 1491.4 751.8C1490.5 753.2 1488.9 753.9 1492.3 755.9C1495.8 758.0 1501.9 760.1 1508.8 762.2C1515.6 764.4 1521.3 765.6 1526.7 766.7C1532.0 767.8 1534.4 766.6 1535.6 767.9C1536.8 769.2 1538.0 770.7 1532.6 773.3C1527.3 775.8 1518.9 779.1 1508.8 780.7C1498.6 782.4 1487.4 780.2 1481.9 781.6C1476.4 783.1 1480.5 785.6 1481.1 787.9C1481.7 790.2 1483.7 790.3 1484.8 793.2C1486.0 796.1 1486.1 798.7 1486.9 802.4C1487.8 806.1 1489.6 809.3 1489.1 811.7C1488.5 814.0 1486.0 813.9 1484.3 814.3C1482.6 814.7 1483.0 815.6 1480.3 813.8C1477.7 811.9 1475.1 808.7 1471.1 805.1C1467.2 801.5 1465.8 799.3 1460.6 795.8C1455.3 792.4 1452.6 790.3 1444.7 787.9C1436.8 785.5 1429.9 784.9 1421.0 784.0C1412.0 783.0 1408.3 782.8 1399.9 783.2C1391.4 783.5 1383.9 784.8 1378.8 785.8C1373.6 786.9 1374.3 786.7 1374.0 788.4C1373.7 790.2 1375.4 792.1 1377.4 794.5C1379.4 796.9 1380.3 798.1 1384.0 800.6C1387.7 803.1 1391.9 805.4 1395.9 806.9C1399.9 808.4 1400.9 807.4 1403.8 808.2C1406.7 809.1 1409.1 809.7 1410.4 811.1C1411.7 812.6 1411.5 813.4 1410.4 815.6C1409.4 817.8 1404.3 818.5 1405.1 822.2C1405.9 825.9 1411.5 829.6 1414.4 834.1C1417.3 838.6 1418.0 839.6 1419.7 844.7C1421.3 849.7 1422.7 854.2 1422.8 859.2C1423.0 864.2 1420.7 866.0 1420.4 869.7C1420.2 873.4 1420.6 873.9 1421.5 877.6C1422.4 881.3 1424.1 880.4 1424.9 888.2C1425.8 896.0 1423.9 910.2 1425.7 916.7C1427.6 923.2 1430.4 919.2 1434.2 920.7C1438.0 922.1 1438.4 922.6 1444.7 923.8C1451.1 925.0 1459.2 926.6 1465.8 926.7C1472.4 926.9 1475.0 924.4 1477.7 924.6C1480.5 924.8 1479.8 926.1 1479.6 927.8C1479.3 929.5 1477.3 930.9 1476.4 933.1C1475.5 935.2 1474.6 934.1 1475.1 938.3C1475.5 942.6 1478.2 949.9 1478.5 954.2C1478.8 958.4 1478.1 957.1 1476.4 959.4C1474.6 961.8 1471.5 960.8 1469.8 966.0C1468.1 971.3 1468.6 976.6 1467.9 985.8C1467.3 995.1 1466.5 1001.7 1466.6 1012.2C1466.7 1022.8 1467.8 1027.0 1468.5 1038.6C1469.2 1050.2 1470.1 1057.9 1470.1 1070.3C1470.1 1082.7 1470.1 1091.7 1468.5 1100.6C1466.8 1109.6 1465.6 1109.9 1461.9 1115.1C1458.2 1120.4 1454.5 1123.3 1450.0 1127.0C1445.5 1130.7 1451.1 1132.2 1439.4 1133.6C1427.8 1135.0 1407.8 1134.3 1391.9 1134.1C1376.1 1134.0 1369.2 1133.7 1360.3 1132.8C1351.3 1131.9 1350.9 1131.3 1347.1 1129.7C1343.3 1128.0 1343.0 1126.8 1341.3 1124.4C1339.5 1122.0 1338.5 1120.7 1338.4 1117.8C1338.2 1114.9 1339.3 1113.0 1340.5 1109.9C1341.7 1106.7 1340.8 1104.8 1344.4 1101.9C1348.1 1099.0 1352.6 1097.7 1359.0 1095.3C1365.3 1093.0 1370.0 1091.0 1376.1 1090.1C1382.2 1089.2 1385.6 1091.4 1389.3 1090.9C1393.0 1090.3 1393.2 1089.4 1394.6 1087.4C1396.0 1085.4 1396.2 1084.8 1396.2 1080.8C1396.2 1076.9 1395.6 1074.0 1394.6 1067.6C1393.6 1061.3 1392.7 1056.0 1391.2 1049.2C1389.6 1042.3 1388.5 1038.9 1386.7 1033.3C1384.8 1027.8 1384.0 1024.4 1381.9 1021.5C1379.8 1018.6 1379.4 1018.3 1376.1 1018.8C1372.8 1019.3 1371.4 1021.2 1365.6 1024.1C1359.8 1027.0 1354.5 1029.6 1347.1 1033.3C1339.7 1037.0 1335.1 1039.7 1328.6 1042.6C1322.1 1045.5 1317.5 1045.2 1314.6 1047.8C1311.7 1050.5 1315.3 1053.3 1314.1 1055.8C1312.9 1058.2 1311.7 1059.2 1308.8 1060.2C1305.9 1061.3 1303.3 1061.6 1299.6 1061.0C1295.9 1060.5 1292.7 1057.7 1290.3 1057.6C1288.0 1057.5 1288.6 1054.5 1287.9 1060.7C1287.3 1066.8 1287.8 1082.4 1287.2 1088.4C1286.5 1094.3 1286.4 1091.4 1284.6 1090.4C1282.9 1089.4 1281.1 1086.8 1278.4 1083.3C1275.6 1079.9 1273.8 1076.2 1270.8 1073.3C1267.8 1070.3 1267.8 1070.0 1263.3 1068.7C1258.7 1067.5 1253.2 1068.2 1248.2 1067.0C1243.1 1065.8 1241.0 1063.2 1238.1 1062.7C1235.2 1062.2 1234.3 1062.8 1233.8 1064.5C1233.3 1066.1 1234.8 1067.5 1235.6 1070.7C1236.3 1074.0 1237.8 1078.0 1237.6 1080.8C1237.3 1083.6 1235.7 1085.6 1234.3 1084.6C1232.9 1083.6 1232.8 1078.8 1230.5 1075.8C1228.3 1072.8 1227.5 1072.5 1223.0 1069.5C1218.5 1066.5 1212.7 1063.1 1207.9 1060.7C1203.1 1058.3 1201.8 1057.7 1199.1 1057.4C1196.3 1057.2 1194.8 1058.3 1194.0 1059.4C1193.3 1060.6 1195.5 1061.9 1195.3 1063.2C1195.0 1064.5 1195.3 1065.7 1192.8 1065.7C1190.3 1065.7 1187.2 1064.2 1182.7 1063.2C1178.2 1062.2 1175.7 1062.7 1170.1 1060.7C1164.6 1058.7 1159.8 1056.0 1155.0 1053.1C1150.2 1050.3 1148.7 1046.7 1146.2 1046.3C1143.7 1046.0 1144.7 1051.5 1142.4 1051.4C1140.2 1051.2 1138.4 1048.7 1134.9 1045.6C1131.4 1042.4 1128.3 1039.3 1124.8 1035.5C1121.3 1031.7 1120.6 1027.4 1117.3 1026.7C1113.9 1026.0 1112.0 1033.2 1108.0 1032.2C1103.9 1031.2 1101.3 1025.3 1097.1 1021.7C1093.0 1018.0 1090.8 1016.1 1087.1 1014.1C1083.3 1012.1 1081.3 1012.9 1078.3 1011.6C1075.2 1010.3 1074.0 1008.1 1072.0 1007.8C1070.0 1007.6 1069.2 1007.3 1068.2 1010.3C1067.2 1013.4 1067.7 1019.5 1066.9 1022.9C1066.2 1026.3 1066.4 1026.8 1064.4 1027.5C1062.4 1028.1 1061.4 1026.4 1056.9 1025.9C1052.3 1025.4 1048.8 1024.9 1041.8 1024.9C1034.7 1024.9 1028.7 1025.2 1021.6 1025.9C1014.6 1026.6 1012.6 1028.1 1006.5 1028.5C1000.5 1028.9 995.2 1027.3 991.4 1028.0C987.6 1028.6 988.2 1027.7 987.6 1031.7C987.1 1035.8 989.4 1044.4 988.9 1048.1C988.4 1051.8 986.6 1050.6 985.1 1050.1C983.6 1049.6 983.6 1047.7 981.4 1045.6C979.1 1043.4 977.3 1041.5 973.8 1039.3C970.3 1037.0 968.0 1035.3 963.7 1034.2C959.5 1033.2 955.5 1033.5 952.4 1034.2C949.3 1035.0 948.4 1036.0 948.1 1038.0C947.9 1040.0 952.1 1042.2 951.2 1044.3C950.2 1046.4 947.6 1047.8 943.6 1048.6C939.6 1049.4 936.6 1048.5 931.0 1048.1C925.5 1047.6 920.2 1046.2 915.9 1046.3C911.6 1046.4 910.3 1047.1 909.6 1048.6C909.0 1050.1 912.6 1052.0 912.6 1053.6C912.6 1055.3 911.5 1057.0 909.6 1056.9C907.8 1056.8 907.1 1054.9 903.3 1053.1C899.6 1051.4 895.8 1049.3 890.7 1048.1C885.7 1046.9 883.2 1046.9 878.2 1047.3C873.1 1047.7 870.4 1049.9 865.6 1050.1C860.8 1050.4 856.5 1048.0 854.2 1048.6C852.0 1049.2 852.7 1051.1 854.2 1053.1C855.8 1055.1 860.8 1056.9 861.8 1058.7C862.8 1060.4 862.6 1061.1 859.3 1061.9C856.0 1062.7 851.2 1062.7 845.4 1062.7C839.7 1062.7 835.4 1062.7 830.3 1061.9C825.3 1061.1 822.7 1058.4 820.3 1058.7C817.9 1058.9 818.8 1058.8 818.3 1063.2C817.8 1067.6 818.4 1076.8 817.8 1080.8C817.2 1084.8 816.7 1084.1 815.2 1083.3C813.7 1082.6 812.7 1080.5 810.2 1077.0C807.7 1073.6 806.2 1069.1 802.7 1066.2C799.1 1063.3 796.6 1063.2 792.6 1062.7C788.6 1062.2 783.3 1062.1 782.5 1063.7C781.7 1065.3 787.7 1068.8 788.4 1070.6C789.1 1072.3 787.9 1072.0 785.9 1072.3C783.9 1072.7 782.4 1072.9 778.4 1072.3C774.3 1071.7 770.8 1070.4 765.8 1069.3C760.7 1068.2 757.0 1068.3 753.2 1066.8C749.4 1065.3 749.2 1063.0 746.9 1061.8C744.6 1060.5 743.9 1060.0 741.9 1060.5C739.8 1061.0 737.6 1061.8 736.8 1064.3C736.1 1066.8 738.8 1071.1 738.1 1073.1C737.3 1075.1 735.6 1075.6 733.0 1074.3C730.5 1073.1 728.5 1069.4 725.5 1066.8C722.5 1064.2 720.1 1062.0 717.9 1061.3C715.8 1060.5 715.4 1061.2 714.9 1063.0C714.4 1064.9 714.4 1066.9 715.4 1070.6C716.4 1074.2 719.7 1078.6 720.0 1081.4C720.2 1084.2 719.6 1084.8 716.7 1084.4C713.8 1084.0 709.6 1081.7 705.4 1079.4C701.1 1077.0 698.3 1074.1 695.3 1072.6C692.3 1071.1 692.8 1071.1 690.3 1071.8C687.7 1072.6 685.2 1076.5 682.7 1076.4C680.2 1076.3 679.2 1071.5 677.7 1071.3C676.2 1071.2 675.9 1072.5 675.2 1075.6C674.4 1078.7 675.6 1082.8 673.9 1086.9C672.2 1091.1 670.6 1094.9 666.9 1096.5C663.1 1098.1 660.4 1093.1 655.0 1095.0C649.6 1096.8 646.5 1101.4 639.9 1105.8C633.4 1110.2 629.9 1112.9 622.3 1117.1C614.8 1121.4 610.2 1123.9 602.2 1127.2C594.1 1130.5 596.1 1132.2 582.0 1133.5C567.9 1134.8 547.8 1134.4 531.7 1133.5C515.6 1132.6 513.1 1130.4 501.5 1129.2C489.9 1128.1 480.9 1129.1 473.8 1127.7C466.8 1126.3 468.3 1125.3 466.3 1122.2C464.2 1119.0 463.7 1116.4 463.7 1112.1C463.7 1107.8 464.2 1104.3 466.3 1100.8C468.3 1097.3 467.8 1096.6 473.8 1094.5C479.8 1092.4 488.2 1091.5 496.5 1090.2C504.8 1088.9 509.5 1089.9 515.3 1088.2C521.1 1086.5 522.1 1084.9 525.4 1081.9C528.7 1078.9 529.9 1076.6 531.7 1073.1C533.5 1069.6 534.2 1067.3 534.2 1064.3C534.2 1061.3 534.2 1061.0 531.7 1058.0C529.2 1055.0 526.7 1053.5 521.6 1049.2C516.6 1044.9 513.1 1041.1 506.5 1036.6C500.0 1032.1 496.0 1030.0 488.9 1026.5C481.9 1023.0 477.8 1022.0 471.3 1019.0C464.7 1016.0 461.7 1014.7 456.2 1011.4C450.6 1008.2 449.6 1005.4 443.6 1002.6C437.6 999.8 432.2 999.6 426.0 997.6C419.8 995.6 415.4 992.3 412.6 992.5C409.9 992.8 411.3 996.5 412.1 998.8C412.9 1001.2 416.7 1002.9 416.7 1004.4C416.7 1005.9 415.3 1007.7 412.1 1006.4C409.0 1005.0 405.1 1000.9 400.8 997.6C396.5 994.3 394.8 992.0 390.7 990.0C386.7 988.0 385.2 990.8 380.7 987.5C376.1 984.2 372.9 979.7 368.1 973.7C363.3 967.6 360.5 964.1 356.8 957.3C353.0 950.5 351.7 946.0 349.2 939.7C346.7 933.4 345.4 930.6 344.2 925.8C342.9 921.1 344.2 919.8 342.9 915.8C341.7 911.8 339.5 909.5 337.9 905.7C336.3 901.9 335.1 900.9 334.9 896.9C334.6 892.9 335.8 890.4 336.6 885.6C337.5 880.8 338.1 878.1 339.1 873.0C340.2 867.9 344.9 862.8 341.7 859.9C338.4 857.0 328.1 859.4 322.8 858.4C317.5 857.4 315.7 856.5 315.2 854.9C314.7 853.3 318.6 851.5 320.3 850.3C321.9 849.2 320.8 850.8 323.6 849.2C326.3 847.6 330.2 845.7 334.0 842.2C337.9 838.7 339.6 836.1 342.7 831.8C345.9 827.4 346.9 825.0 349.7 820.4C352.5 815.9 353.5 814.2 356.7 809.1C359.8 804.0 362.2 800.7 365.4 795.2C368.5 789.6 370.1 785.1 372.4 781.2C374.6 777.4 374.8 778.8 376.7 776.0C378.6 773.2 380.4 770.4 381.9 767.3C383.5 764.1 383.3 762.1 384.5 760.3C385.8 758.6 386.3 758.2 388.0 758.6C389.8 758.9 390.5 759.4 393.3 762.1C396.1 764.7 398.1 768.2 402.0 771.6C405.8 775.1 408.9 777.4 412.4 779.5C415.9 781.6 417.2 782.1 419.4 782.1C421.6 782.1 422.7 781.4 423.2 779.5C423.8 777.6 423.1 776.5 422.0 772.5C420.9 768.5 419.6 765.1 417.7 759.4C415.7 753.8 411.0 746.0 412.4 744.3C413.8 742.5 420.1 749.1 424.6 750.7C429.2 752.4 431.1 751.2 435.1 752.5C439.1 753.7 442.1 756.1 444.7 756.8C447.3 757.5 447.1 757.2 448.2 756.0C449.2 754.7 450.6 753.3 449.9 750.7C449.2 748.1 446.0 746.0 444.7 742.9C443.4 739.7 443.1 737.6 443.4 735.0C443.8 732.5 444.8 730.9 446.4 730.3C448.0 729.8 450.2 732.5 451.6 732.4C453.0 732.3 452.9 732.6 453.4 729.8C453.9 727.0 453.4 721.5 454.2 718.5C455.1 715.5 454.9 714.1 457.7 715.0C460.5 715.9 464.4 720.9 468.2 722.8C472.0 724.8 473.9 724.6 476.9 724.6C479.9 724.6 481.6 723.9 483.0 722.8C484.4 721.8 484.9 722.5 483.9 719.4C482.8 716.2 478.5 710.0 477.8 707.2C477.1 704.4 477.8 704.0 480.4 705.4C483.0 706.8 486.3 711.3 490.8 714.1C495.4 716.9 498.7 718.0 503.0 719.4C507.4 720.8 510.4 721.6 512.6 721.1C514.9 720.6 514.9 719.9 514.4 716.7C513.8 713.6 509.1 707.9 510.0 705.4C510.9 702.9 516.1 705.1 518.7 704.2C521.3 703.3 522.0 706.2 523.1 701.1C524.1 695.9 523.8 686.4 523.9 678.4C524.1 670.4 524.1 666.4 523.6 661.0C523.1 655.6 521.3 654.0 521.3 651.4C521.4 648.8 522.0 647.9 523.9 647.9C525.9 647.9 528.5 650.4 530.9 651.4C533.4 652.4 534.2 653.3 536.1 653.1C538.1 653.0 539.8 652.1 540.5 650.5C541.2 649.0 541.9 648.1 539.6 645.3C537.4 642.5 532.0 640.1 529.2 636.6C526.4 633.1 526.7 632.1 525.7 627.9C524.6 623.7 525.1 619.7 523.9 615.7C522.8 611.7 520.9 611.0 520.1 607.8C519.3 604.7 520.0 602.8 520.1 600.0C520.2 597.2 520.8 599.3 520.6 594.1C520.4 588.9 520.1 582.5 519.3 573.9C518.6 565.4 517.1 558.8 516.8 551.3C516.6 543.7 518.6 542.2 518.1 536.2C517.6 530.1 516.1 527.6 514.3 521.1C512.5 514.5 511.5 510.5 509.3 503.5C507.0 496.4 505.2 491.6 503.0 485.8C500.7 480.1 500.0 477.9 497.9 474.5C495.9 471.1 494.8 469.2 492.9 468.7C491.1 468.2 489.1 469.6 488.6 472.0C488.1 474.4 489.0 476.5 490.4 480.8C491.8 485.1 493.7 488.4 495.4 493.4C497.2 498.4 497.9 502.0 499.2 506.0C500.5 510.0 500.7 510.0 501.7 513.5C502.7 517.1 504.1 520.8 504.2 523.6C504.4 526.4 503.9 526.1 502.5 527.4C501.1 528.6 497.8 528.1 497.2 529.9C496.5 531.7 497.8 532.4 499.2 536.2C500.6 540.0 502.7 543.7 504.2 548.8C505.8 553.8 505.8 555.3 506.8 561.4C507.8 567.4 508.5 571.9 509.3 579.0C510.0 586.0 510.4 592.4 510.5 596.6C510.7 600.8 510.1 597.6 510.0 600.0C509.9 602.4 510.2 604.5 510.0 608.7C509.8 612.9 509.8 616.9 509.1 620.9C508.4 624.9 506.4 625.3 506.5 628.8C506.7 632.2 509.0 633.6 510.0 638.3C511.1 643.0 511.2 644.3 511.8 652.3C512.3 660.3 513.0 671.6 512.6 678.4C512.3 685.2 511.4 684.5 510.0 686.3C508.6 688.0 507.7 688.0 505.7 687.1C503.6 686.3 502.0 684.7 499.6 681.9C497.1 679.1 495.2 676.1 493.5 673.2C491.7 670.2 492.4 668.1 490.8 667.1C489.3 666.1 486.8 667.1 485.6 668.3C484.4 669.5 484.2 669.8 484.7 673.2C485.3 676.6 486.5 680.5 488.2 685.4C490.0 690.3 492.4 694.1 493.5 697.6C494.5 701.1 494.2 701.6 493.5 702.8C492.8 704.0 491.9 704.7 490.0 703.7C488.1 702.6 486.5 700.5 483.9 697.6C481.3 694.6 479.3 692.7 476.9 688.9C474.5 685.0 473.5 681.8 471.7 678.4C469.9 675.0 469.2 672.5 467.8 671.8C466.4 671.1 465.5 672.6 464.7 674.9C463.9 677.3 463.9 678.8 463.8 683.6C463.8 688.5 465.2 697.2 464.4 699.3C463.5 701.4 461.3 696.9 459.5 694.1C457.6 691.3 456.3 689.2 455.1 685.4C453.9 681.5 454.4 677.4 453.4 674.9C452.3 672.4 451.5 673.0 449.9 672.8C448.3 672.7 447.1 672.4 445.5 674.1C444.0 675.7 443.8 679.3 442.1 681.0C440.3 682.8 438.4 681.9 436.8 682.8C435.3 683.6 435.1 682.4 434.2 685.4C433.3 688.3 433.3 693.0 432.5 697.6C431.6 702.1 430.6 703.9 429.9 708.0C429.2 712.2 429.7 715.7 429.0 718.5C428.3 721.3 427.6 721.6 426.4 722.0C425.2 722.3 424.3 721.6 422.9 720.2C421.5 718.8 420.8 716.2 419.4 715.0C418.0 713.8 417.1 713.4 415.9 714.1C414.7 714.8 413.7 715.5 413.3 718.5C412.9 721.5 415.0 727.4 413.8 728.9C412.6 730.5 409.6 727.7 407.2 726.3C404.8 724.9 403.4 721.8 402.0 722.0C400.6 722.1 400.6 723.7 400.2 727.2C399.9 730.7 399.5 734.9 400.2 739.4C400.9 743.9 403.4 747.1 403.7 749.9C404.1 752.6 403.7 753.7 402.0 753.3C400.2 753.0 396.7 750.9 395.0 748.1C393.3 745.3 394.5 743.2 393.3 739.4C392.0 735.6 390.1 733.5 388.9 728.9C387.7 724.4 388.0 721.5 387.2 716.7C386.3 712.0 385.9 708.4 384.5 705.4C383.2 702.5 381.8 702.1 380.2 701.9C378.6 701.8 377.6 702.6 376.7 704.5C375.8 706.5 375.5 707.7 375.5 711.5C375.5 715.4 376.1 718.1 376.7 723.7C377.3 729.3 378.5 733.5 378.5 739.4C378.5 745.3 377.9 748.5 376.7 753.3C375.5 758.2 373.9 760.1 372.4 763.8C370.8 767.5 370.6 769.5 368.9 771.6C367.1 773.7 366.1 776.0 363.6 774.2C361.2 772.5 359.5 767.1 356.7 762.9C353.9 758.7 352.7 757.3 349.7 753.3C346.7 749.3 344.1 744.6 341.9 742.9C339.6 741.1 339.4 742.9 338.4 744.6C337.3 746.4 336.6 748.1 336.6 751.6C336.6 755.1 338.5 759.6 338.4 762.1C338.2 764.5 337.3 763.6 335.8 763.8C334.2 764.0 332.4 765.4 330.5 762.9C328.6 760.5 327.9 756.3 326.2 751.6C324.4 746.9 324.8 744.6 321.8 739.4C318.9 734.2 313.5 734.3 311.4 725.5C309.2 716.6 311.7 701.2 311.0 695.0C310.3 688.7 309.7 693.7 307.9 694.1C306.0 694.4 303.3 696.7 301.8 696.7C300.2 696.7 299.2 696.7 300.0 694.1C300.9 691.5 304.0 687.8 306.1 683.6C308.2 679.5 309.3 677.7 310.5 673.2C311.7 668.7 311.0 665.5 312.2 661.0C313.5 656.5 315.0 654.4 316.6 650.5C318.2 646.7 318.0 645.3 320.1 641.8C322.2 638.3 323.9 636.9 327.0 633.1C330.2 629.3 332.6 626.8 335.8 622.7C338.9 618.5 340.8 616.7 342.7 612.2C344.6 607.7 345.3 603.1 345.3 600.0C345.4 596.9 344.7 598.3 343.2 596.6C341.6 594.9 338.5 596.6 337.6 591.6C336.8 586.5 338.3 579.0 338.9 571.4C339.5 563.9 339.8 560.9 340.6 553.8C341.5 546.8 342.1 542.2 343.2 536.2C344.2 530.1 344.2 528.6 345.7 523.6C347.2 518.6 348.4 516.1 350.7 511.0C353.0 506.0 354.5 503.5 357.0 498.4C359.5 493.4 361.0 490.4 363.3 485.8C365.6 481.3 367.0 479.1 368.3 475.8C369.7 472.5 370.1 471.2 370.1 469.5C370.1 467.7 369.3 467.3 368.3 467.0C367.3 466.6 366.6 467.0 365.1 467.7C363.5 468.5 362.9 467.9 360.8 470.7C358.7 473.6 357.3 477.0 354.5 482.1C351.7 487.1 350.0 489.9 346.9 495.9C343.9 502.0 341.6 506.2 339.4 512.3C337.1 518.3 336.9 520.8 335.6 526.1C334.3 531.4 334.3 532.2 333.1 538.7C331.8 545.2 330.5 551.8 329.3 558.8C328.2 565.9 328.1 568.4 327.3 573.9C326.5 579.5 326.6 581.5 325.5 586.5C324.4 591.6 323.5 594.6 321.8 599.1C320.0 603.6 318.5 605.7 316.7 609.2C315.0 612.7 314.2 614.2 313.0 616.7C311.7 619.2 310.8 619.0 310.4 621.8C310.1 624.5 311.4 628.2 311.2 630.6C310.9 632.9 311.6 633.3 309.2 633.6C306.8 633.8 303.6 632.8 299.1 631.8C294.6 630.9 292.6 630.1 286.5 628.8C280.5 627.6 276.0 626.8 268.9 625.5C261.9 624.2 260.3 623.3 251.3 622.3C242.2 621.3 234.2 621.4 223.6 620.5C213.0 619.6 207.5 619.2 198.4 618.0C189.4 616.7 185.3 616.0 178.3 614.2C171.2 612.4 169.2 611.7 163.2 609.2C157.2 606.7 154.1 604.6 148.1 601.6C142.1 598.6 138.0 597.1 133.0 594.1C128.0 591.1 126.7 589.8 122.9 586.5C119.1 583.3 117.4 581.7 114.1 577.7C110.8 573.7 109.8 571.4 106.6 566.4C103.3 561.4 102.0 558.3 97.8 552.5C93.5 546.8 88.5 541.9 85.4 537.4C82.4 533.0 83.4 533.1 82.4 530.4C81.4 527.7 81.0 526.9 80.5 524.1C80.0 521.3 79.9 519.2 79.8 516.6Z" fill="#000"/>
<g stroke="#5151d6" stroke-width="1" stroke-dasharray="4.4 3.6" shape-rendering="crispEdges" fill="none"><path d="M80.1 377.5H1557.5" stroke-dashoffset="3.8"/><path d="M80.1 1134.5H1557.5" stroke-dashoffset="0.9"/><path d="M80.5 377.5V1134.5" stroke-dashoffset="4"/><path d="M1557.5 377.5V1134.5"/></g>
<clipPath id="cvclip"><rect x="70" y="174" width="1498" height="1164"/></clipPath><g clip-path="url(#cvclip)">
<g transform="translate(75 371.5) rotate(45)"><path d="M-7.5 0 L-2.5999999999999996 -4.65 V-2.3 H2.5999999999999996 V-4.65 L7.5 0 L2.5999999999999996 4.65 V2.3 H-2.5999999999999996 V4.65 Z" fill="#000"/></g>
<g transform="translate(818.5 371.4) rotate(90)"><path d="M-6.6 0 L-1.6999999999999993 -4.65 V-2.3 H1.6999999999999993 V-4.65 L6.6 0 L1.6999999999999993 4.65 V2.3 H-1.6999999999999993 V4.65 Z" fill="#000"/></g>
<g transform="translate(1563 371.5) rotate(-45)"><path d="M-7.5 0 L-2.5999999999999996 -4.65 V-2.3 H2.5999999999999996 V-4.65 L7.5 0 L2.5999999999999996 4.65 V2.3 H-2.5999999999999996 V4.65 Z" fill="#000"/></g>
<g transform="translate(74 755.8) rotate(0)"><path d="M-6.6 0 L-1.6999999999999993 -4.65 V-2.3 H1.6999999999999993 V-4.65 L6.6 0 L1.6999999999999993 4.65 V2.3 H-1.6999999999999993 V4.65 Z" fill="#000"/></g>
<g transform="translate(1564 755.8) rotate(0)"><path d="M-6.6 0 L-1.6999999999999993 -4.65 V-2.3 H1.6999999999999993 V-4.65 L6.6 0 L1.6999999999999993 4.65 V2.3 H-1.6999999999999993 V4.65 Z" fill="#000"/></g>
<g transform="translate(75 1140.5) rotate(-45)"><path d="M-7.5 0 L-2.5999999999999996 -4.65 V-2.3 H2.5999999999999996 V-4.65 L7.5 0 L2.5999999999999996 4.65 V2.3 H-2.5999999999999996 V4.65 Z" fill="#000"/></g>
<g transform="translate(818.5 1141) rotate(90)"><path d="M-6.6 0 L-1.6999999999999993 -4.65 V-2.3 H1.6999999999999993 V-4.65 L6.6 0 L1.6999999999999993 4.65 V2.3 H-1.6999999999999993 V4.65 Z" fill="#000"/></g>
<g transform="translate(1563 1140.5) rotate(45)"><path d="M-7.5 0 L-2.5999999999999996 -4.65 V-2.3 H2.5999999999999996 V-4.65 L7.5 0 L2.5999999999999996 4.65 V2.3 H-2.5999999999999996 V4.65 Z" fill="#000"/></g>
</g>
</svg>
<div class="a" style="left:1568.5px;top:1338.5px;width:17px;height:17px;background:#f9f9f8;border:1px solid #dad7d3;border-radius:4px"></div>
<svg style="left:1570px;top:1340px" width="14" height="14" viewBox="0 0 14 14"><defs><linearGradient id="cm" x1="0" y1="0" x2="1" y2="1"><stop offset="0" stop-color="#bfeccb"/><stop offset=".6" stop-color="#f3c7ea"/><stop offset="1" stop-color="#c9d2f6"/></linearGradient></defs><path d="M1.5 1 L12.5 9 L2.5 13z" fill="url(#cm)"/></svg>
<div class="a" style="left:1586px;top:156px;width:1.7px;height:1200px;background:#d3cec9"></div>
<div class="a" style="left:1587.5px;top:156px;width:433px;height:680px;background:#fbfbfb"></div>
<div class="a" style="left:1587.5px;top:190px;width:433px;height:1px;background:#d5d0cc"></div>
<div class="a" style="left:2019.5px;top:191px;width:1px;height:540px;background:#dedbd8"></div>
<svg style="left:1587.5px;top:166.5px" width="16" height="16" viewBox="0 0 16 16" ><rect x=".6" y="5.7" width="8.8" height="9" fill="url(#gOP)" stroke="#2b2b2b" stroke-width="1.2"/><path d="M8.4 .8 H10.6 V2.9 H12.9 V.8 H15.2 V4.6 Q15.2 6.4 13.4 6.4 V10.6 Q15.4 10.6 15.4 12.6 V15.6 H13 V13.6 H10.6 V15.6 H8.2 V12.6 Q8.2 10.6 10.2 10.6 V6.4 Q8.4 6.4 8.4 4.6Z" fill="url(#gWr)" stroke="#000" stroke-width="1.2" stroke-linejoin="round"/></svg>
<div class="t " id="F17" style="left:1604px;top:164.5px;font-size:18px;color:#959da6;letter-spacing:-0.075px">Object Properties (Shift+Ctrl+O)</div>
<div class="a" style="left:1960px;top:163px;width:11px;height:10px;border:1px solid #d3d2d0;border-radius:2px"></div>
<svg style="left:1962.5px;top:165.5px" width="6" height="5" viewBox="0 0 6 5"><path d="M5 0v5L0 2.5z" fill="#c9c9c8"/></svg>
<div class="a" style="left:1996px;top:163px;width:11px;height:10px;border:1px solid #d3d2d0;border-radius:2px"></div>
<svg style="left:1998.5px;top:165px" width="6" height="6" viewBox="0 0 6 6"><path d="M.5 .5l5 5M5.5 .5l-5 5" stroke="#c4c4c3" stroke-width="1.6"/></svg>
<div class="t " id="F18" style="left:1594.5px;top:207px;font-size:18px;color:#959da6;letter-spacing:-0.272px">ID:</div>
<div class="fld" style="left:1645px;top:198px;width:368px;height:34px"></div>
<div class="t " id="F19" style="left:1654px;top:206.5px;font-size:18px;color:#2e3436;letter-spacing:-0.512px">use6</div>
<div class="t " id="F20" style="left:1594.5px;top:245px;font-size:18px;color:#959da6;letter-spacing:-0.591px">Label:</div>
<div class="fld" style="left:1645px;top:236px;width:368px;height:34px"></div>
<div class="t " id="F21" style="left:1654px;top:244.5px;font-size:18px;color:#8a9199;letter-spacing:-0.249px">#use6</div>
<div class="t " id="F22" style="left:1594.5px;top:283px;font-size:18px;color:#959da6;letter-spacing:-0.307px">Title:</div>
<div class="fld" style="left:1645px;top:274px;width:368px;height:34px"></div>
<div class="t " id="F23" style="left:1591.5px;top:317px;font-size:18px;color:#959da6;letter-spacing:-0.121px">Description:</div>
<div class="a" style="left:1603px;top:345px;width:410px;height:275px;background:#fcfcfc;border:1px solid #cdc7c2"></div>
<div class="a" style="left:1599px;top:637.5px;width:16px;height:16px;background:#fdfdfd;border:1px solid #cdc7c2;border-radius:3px"></div>
<div class="t " id="F24" style="left:1619.5px;top:637.8px;font-size:18px;color:#959da6;letter-spacing:-0.108px">Hide</div>
<div class="a" style="left:1807.5px;top:637.5px;width:16px;height:16px;background:#fdfdfd;border:1px solid #cdc7c2;border-radius:3px"></div>
<div class="t " id="F25" style="left:1828px;top:637.8px;font-size:18px;color:#959da6;letter-spacing:-0.558px">Lock</div>
<div class="a" style="left:1599px;top:672.5px;width:16px;height:16px;background:#3584e4;border:1px solid #1b6acb;border-radius:3px"></div>
<svg style="left:1601.5px;top:676.0px" width="11" height="9" viewBox="0 0 11 9"><path d="M1 4.5 L4 7.5 L10 1.2" fill="none" stroke="#fff" stroke-width="2"/></svg>
<div class="t " id="F26" style="left:1619.5px;top:672.8px;font-size:18px;color:#959da6;letter-spacing:-0.554px">Preserve Ratio</div>
<div class="a" style="left:1804px;top:663px;width:209px;height:35px;background:#f6f5f4;border:1px solid #d5d0cc;border-radius:5px"></div>
<div class="t " id="F27" style="left:1896.3px;top:672.5px;font-size:18px;color:#959da6;letter-spacing:-0.810px">Set</div>
<svg style="left:1597px;top:709.5px" width="5" height="9" viewBox="0 0 5 9"><path d="M0 0L5 4.5L0 9z" fill="#8f9496"/></svg>
<div class="t " id="F28" style="left:1607.5px;top:706.8px;font-size:18px;color:#959da6;letter-spacing:-0.064px">Interactivity</div>
<div class="a" style="left:1587px;top:731px;width:434px;height:35px;background:#f6f5f4;border:1px solid #dbd8d4;border-radius:4px"></div>
<svg style="left:1596.5px;top:739.5px" width="16" height="16" viewBox="0 0 16 16" ><path d="M.7 .8h7l3.7 3.7v10.8h-10.7z" fill="url(#gPg)" stroke="#000" stroke-width="1.2"/><path d="M7.5 1v3.7h3.7" fill="none" stroke="#000" stroke-width="1"/><path d="M6 8.3h7" stroke="#000" stroke-width="1.3"/><path d="M12.3 5.8 L16 8.3 L12.3 10.8z" fill="#000"/></svg>
<div class="t " id="F29" style="left:1616.3px;top:740.6px;font-size:18px;color:#959da6;letter-spacing:-0.264px">Export PNG Image (Shift+Ctrl+E)</div>
<svg style="left:1997px;top:744.5px" width="11" height="7" viewBox="0 0 11 7"><path d="M1 6L5.5 1.5L10 6" fill="none" stroke="#a2a5a6" stroke-width="1.6"/></svg>
<div class="a" style="left:1587px;top:766px;width:434px;height:35px;background:#f6f5f4;border:1px solid #dbd8d4;border-radius:4px"></div>
<svg style="left:1596.5px;top:774.5px" width="16" height="16" viewBox="0 0 16 16" ><path d="M.9 15.2V.9H15.2" fill="none" stroke="#000" stroke-width="1.7"/><rect x="1.7" y="1.7" width="13.4" height="13.4" fill="#fff"/><path d="M.4 15.6 L3.4 10 L11.2 2.8 L14.6 5.4 L9.4 13 Z" fill="#000"/><path d="M11.2 2.8 L15.8 .2 L14.6 5.4z" fill="#f5c211"/><path d="M.4 15.6 L9.4 13 L15.4 10 V15.6z" fill="#000" opacity=".9"/></svg>
<div class="t " id="F30" style="left:1616.3px;top:775.6px;font-size:18px;color:#959da6;letter-spacing:-0.179px">Fill and Stroke (Shift+Ctrl+F)</div>
<svg style="left:1997px;top:779.5px" width="11" height="7" viewBox="0 0 11 7"><path d="M1 6L5.5 1.5L10 6" fill="none" stroke="#a2a5a6" stroke-width="1.6"/></svg>
<div class="a" style="left:1587px;top:801px;width:434px;height:35px;background:#e1e0de;border:1px solid #dbd8d4;border-radius:4px"></div>
<svg style="left:1596.5px;top:809.5px" width="16" height="16" viewBox="0 0 16 16" ><rect x=".6" y="5.7" width="8.8" height="9" fill="url(#gOP)" stroke="#2b2b2b" stroke-width="1.2"/><path d="M8.4 .8 H10.6 V2.9 H12.9 V.8 H15.2 V4.6 Q15.2 6.4 13.4 6.4 V10.6 Q15.4 10.6 15.4 12.6 V15.6 H13 V13.6 H10.6 V15.6 H8.2 V12.6 Q8.2 10.6 10.2 10.6 V6.4 Q8.4 6.4 8.4 4.6Z" fill="url(#gWr)" stroke="#000" stroke-width="1.2" stroke-linejoin="round"/></svg>
<div class="t " id="F31" style="left:1616.3px;top:810.6px;font-size:18px;color:#959da6;letter-spacing:-0.075px">Object Properties (Shift+Ctrl+O)</div>
<svg style="left:1997px;top:814.5px" width="11" height="7" viewBox="0 0 11 7"><path d="M1 6L5.5 1.5L10 6" fill="none" stroke="#a2a5a6" stroke-width="1.6"/></svg>
<div class="tg" style="left:2026px;top:160px;width:36px;height:34px"></div>
<div class="tg" style="left:2026px;top:398px;width:36px;height:34px"></div>
<div class="tg" style="left:2026px;top:503px;width:36px;height:34px"></div>
<div class="tg" style="left:2026px;top:622px;width:36px;height:34px"></div>
<div class="tg" style="left:2026px;top:811px;width:36px;height:33px"></div>
<div class="tg" style="left:2026px;top:846px;width:36px;height:33px"></div>
<svg style="left:2035.0px;top:168.0px" width="18" height="18" viewBox="0 0 16 16" ><path d="M4 4 L11 10.6" stroke="#000" stroke-width="1.2"/><path d="M12.2 11.6 L8.4 10.8 L10.9 8.2Z" fill="#000"/><path d="M3 3m-2.3 0l2.3-2.3l2.3 2.3l-2.3 2.3z" fill="#dfe0ff" stroke="#2a2ae8" stroke-width="1.1"/><path d="M13 12.6m-2.3 0l2.3-2.3l2.3 2.3l-2.3 2.3z" fill="#cfe6cf" stroke="#2e8b2e" stroke-width="1.1"/></svg>
<div class="sep" style="left:2026px;top:201.5px;width:36px;height:1px"></div>
<svg style="left:2035.0px;top:217.0px" width="18" height="18" viewBox="0 0 16 16" ><path d="M4 4 L11 10.6" stroke="#000" stroke-width="1.2"/><path d="M12.2 11.6 L8.4 10.8 L10.9 8.2Z" fill="#000"/><path d="M3 3m-2.3 0l2.3-2.3l2.3 2.3l-2.3 2.3z" fill="#dfe0ff" stroke="#2a2ae8" stroke-width="1.1"/><path d="M13 12.6m-2.3 0l2.3-2.3l2.3 2.3l-2.3 2.3z" fill="#cfe6cf" stroke="#2e8b2e" stroke-width="1.1"/></svg>
<svg style="left:2035.0px;top:251.5px" width="18" height="18" viewBox="0 0 16 16" ><path d="M3 13.5h9.5M13 13.5V2" stroke="#d9e6d9" stroke-width="1.3" stroke-dasharray="1.3 1"/></svg>
<svg style="left:2035.0px;top:287.0px" width="18" height="18" viewBox="0 0 16 16" ><path d="M3 9.5h9.5M13 14V2" stroke="#d9e6d9" stroke-width="1.3" stroke-dasharray="1.3 1"/><path d="M13 7.2l2.3 2.3l-2.3 2.3l-2.3-2.3z" fill="#d9e6d9"/></svg>
<svg style="left:2035.0px;top:322.0px" width="18" height="18" viewBox="0 0 16 16" ><path d="M3 13.5h9.5M13 13.5V2" stroke="#d9e6d9" stroke-width="1.3" stroke-dasharray="1.3 1"/><ellipse cx="13" cy="5.2" rx="1.8" ry="2.6" fill="#d9e6d9"/></svg>
<svg style="left:2035.0px;top:356.5px" width="18" height="18" viewBox="0 0 16 16" ><path d="M3 13.5h9.5M13 13.5V2" stroke="#d9e6d9" stroke-width="1.3" stroke-dasharray="1.3 1"/><circle cx="5" cy="6" r="1.7" fill="none" stroke="#d9e6d9" stroke-width="1"/></svg>
<div class="sep" style="left:2026px;top:390.5px;width:36px;height:1px"></div>
<svg style="left:2035.0px;top:406.0px" width="18" height="18" viewBox="0 0 16 16" ><path d="M4 4 L11 10.6" stroke="#000" stroke-width="1.2"/><path d="M12.2 11.6 L8.4 10.8 L10.9 8.2Z" fill="#000"/><path d="M3 3m-2.3 0l2.3-2.3l2.3 2.3l-2.3 2.3z" fill="#dfe0ff" stroke="#2a2ae8" stroke-width="1.1"/><path d="M13 12.6m-2.3 0l2.3-2.3l2.3 2.3l-2.3 2.3z" fill="#cfe6cf" stroke="#2e8b2e" stroke-width="1.1"/></svg>
<svg style="left:2035.0px;top:441.5px" width="18" height="18" viewBox="0 0 16 16" ><path d="M2.5 2 C8 2.6 12 6.4 9.4 13.4 C12 13.4 14.4 11.6 15 8.6" fill="none" stroke="#1e8c1e" stroke-width="1.7"/></svg>
<svg style="left:2035.0px;top:476.0px" width="18" height="18" viewBox="0 0 16 16" ><path d="M1.5 13.8 L14.6 3.4 M2 10.6 L15 6.8" stroke="#333" stroke-width="1"/><circle cx="8.4" cy="8.6" r="1.8" fill="#39a339" stroke="#1b5e1b" stroke-width=".9"/></svg>
<svg style="left:2035.0px;top:511.0px" width="18" height="18" viewBox="0 0 16 16" ><path d="M2.6 1.6 C8.6 2.4 10.6 6.6 8.4 11.6 C11.6 11.6 14.4 9.4 15.2 6" fill="none" stroke="#333" stroke-width="1.1"/><path d="M8.2 12m-2.3 0l2.3-2.3l2.3 2.3l-2.3 2.3z" fill="#cfe6cf" stroke="#2e8b2e" stroke-width="1.1"/></svg>
<svg style="left:2035.0px;top:545.5px" width="18" height="18" viewBox="0 0 16 16" ><path d="M2 1.8 C5.6 1.6 8.4 2.8 9.4 5.6 C10.4 8.4 9 10.6 11.4 12.6 C13 12.2 14.6 10 15 7.6" fill="none" stroke="#333" stroke-width="1.1"/><rect x="6.6" y="1.6" width="3.6" height="3.6" fill="#9fd09f" stroke="#2e8b2e" stroke-width="1"/></svg>
<svg style="left:2035.0px;top:580.5px" width="18" height="18" viewBox="0 0 16 16" ><path d="M1.4 13.6 L14.8 2.4" stroke="#c81e1e" stroke-width="1.2"/><path d="M3 9.2l2.6 4.2M11 3l2.6 4.2M12.6 1.8l2.4 4" stroke="#c81e1e" stroke-width="1.1"/><circle cx="8" cy="8.2" r="1.7" fill="#39a339" stroke="#1b5e1b" stroke-width=".9"/></svg>
<div class="sep" style="left:2026px;top:614.0px;width:36px;height:1px"></div>
<svg style="left:2035.0px;top:629.5px" width="18" height="18" viewBox="0 0 16 16" ><path d="M4 4 L11 10.6" stroke="#000" stroke-width="1.2"/><path d="M12.2 11.6 L8.4 10.8 L10.9 8.2Z" fill="#000"/><path d="M3 3m-2.3 0l2.3-2.3l2.3 2.3l-2.3 2.3z" fill="#dfe0ff" stroke="#2a2ae8" stroke-width="1.1"/><path d="M13 12.6m-2.3 0l2.3-2.3l2.3 2.3l-2.3 2.3z" fill="#cfe6cf" stroke="#2e8b2e" stroke-width="1.1"/></svg>
<svg style="left:2035.0px;top:664.0px" width="18" height="18" viewBox="0 0 16 16" ><path d="M2.6 14.4h11.2V3.2" fill="none" stroke="#8a8a8a" stroke-width="1.3"/><circle cx="7" cy="7.2" r="1.9" fill="#bfe3bf" stroke="#2e8b2e" stroke-width="1.1"/></svg>
<svg style="left:2035.0px;top:699.0px" width="18" height="18" viewBox="0 0 16 16" ><path d="M3 14.4h10.6M13.8 14.4V2.6" fill="none" stroke="#333" stroke-width="1.2" stroke-dasharray="1.2 1"/><path d="M3.4 7.6h6.4M6.6 4.4v6.4" stroke="#000" stroke-width="1.3"/></svg>
<svg style="left:2035.0px;top:734.5px" width="18" height="18" viewBox="0 0 16 16" ><text x="9.2" y="13" text-anchor="middle" font-family="Liberation Sans,sans-serif" font-weight="700" font-size="15.5" fill="#000" stroke="#000" stroke-width=".4">A</text><path d="M3 13.4h11" stroke="#2e8b2e" stroke-width="1.3"/><path d="M2.8 13.4m-2.3 0l2.3-2.3l2.3 2.3l-2.3 2.3z" fill="#cfe6cf" stroke="#2e8b2e" stroke-width="1.1"/></svg>
<div class="sep" style="left:2026px;top:768.5px;width:36px;height:1px"></div>
<svg style="left:2035.0px;top:784.0px" width="18" height="18" viewBox="0 0 16 16" ><rect x="3.2" y="1.6" width="9.8" height="12.8" fill="url(#gPg2)" stroke="#2b2b2b" stroke-width="1.3"/></svg>
<svg style="left:2035.0px;top:819.0px" width="18" height="18" viewBox="0 0 16 16" ><path d="M.8 4.4h14.4M.8 8.4h14.4M.8 12.4h14.4M3.8 1.2v14M8 1.2v14M12.2 1.2v14" stroke="#1414f0" stroke-width="1.2"/></svg>
<svg style="left:2035.0px;top:854.0px" width="18" height="18" viewBox="0 0 16 16" ><path d="M2.4 1.4v13.6M13.8 1.4v13.6M5.6 15 L11.2 1.4" stroke="#1414f0" stroke-width="1.3"/></svg>
<div class="a" style="left:0;top:1356px;width:2066px;height:34px;background:#efedeb"></div>
<div class="a" style="left:2029.5px;top:1338px;width:37px;height:52px;background:#f6f5f4"></div>
<div class="a" style="left:1587.5px;top:1338px;width:480px;height:18px;background:#f6f5f4"></div>
<svg style="left:0;top:1356px" width="2030" height="21" viewBox="0 0 2030 21" shape-rendering="crispEdges"><rect x="0" y="0" width="19" height="21" fill="#fff"/><path d="M0.5 0.5L18.5 20.5M18.5 0.5L0.5 20.5" stroke="#7a0b0b" stroke-width="1.8"/><rect x="19" y="0" width="19" height="21" fill="#000000"/><rect x="38" y="0" width="19" height="21" fill="#1a1a1a"/><rect x="57" y="0" width="19" height="21" fill="#333333"/><rect x="76" y="0" width="19" height="21" fill="#4d4d4d"/><rect x="95" y="0" width="19" height="21" fill="#666666"/><rect x="114" y="0" width="19" height="21" fill="#808080"/><rect x="133" y="0" width="19" height="21" fill="#999999"/><rect x="152" y="0" width="19" height="21" fill="#b3b3b3"/><rect x="171" y="0" width="19" height="21" fill="#cccccc"/><rect x="190" y="0" width="19" height="21" fill="#e6e6e6"/><rect x="209" y="0" width="19" height="21" fill="#ececec"/><rect x="228" y="0" width="19" height="21" fill="#f2f2f2"/><rect x="247" y="0" width="19" height="21" fill="#f9f9f9"/><rect x="266" y="0" width="19" height="21" fill="#ffffff"/><rect x="285" y="0" width="19" height="21" fill="#800000"/><rect x="304" y="0" width="19" height="21" fill="#ff0000"/><rect x="323" y="0" width="19" height="21" fill="#808000"/><rect x="342" y="0" width="19" height="21" fill="#ffff00"/><rect x="361" y="0" width="19" height="21" fill="#008000"/><rect x="380" y="0" width="19" height="21" fill="#00ff00"/><rect x="399" y="0" width="19" height="21" fill="#008080"/><rect x="418" y="0" width="19" height="21" fill="#00ffff"/><rect x="437" y="0" width="19" height="21" fill="#000080"/><rect x="456" y="0" width="19" height="21" fill="#0000ff"/><rect x="475" y="0" width="19" height="21" fill="#800080"/><rect x="494" y="0" width="19" height="21" fill="#ff00ff"/><rect x="513" y="0" width="19" height="21" fill="#2b0000"/><rect x="532" y="0" width="19" height="21" fill="#550000"/><rect x="551" y="0" width="19" height="21" fill="#800000"/><rect x="570" y="0" width="19" height="21" fill="#aa0000"/><rect x="589" y="0" width="19" height="21" fill="#d40000"/><rect x="608" y="0" width="19" height="21" fill="#ff0000"/><rect x="627" y="0" width="19" height="21" fill="#ff2a2a"/><rect x="646" y="0" width="19" height="21" fill="#ff5555"/><rect x="665" y="0" width="19" height="21" fill="#ff8080"/><rect x="684" y="0" width="19" height="21" fill="#ffaaaa"/><rect x="703" y="0" width="19" height="21" fill="#ffd5d5"/><rect x="722" y="0" width="19" height="21" fill="#280b0b"/><rect x="741" y="0" width="19" height="21" fill="#501616"/><rect x="760" y="0" width="19" height="21" fill="#782121"/><rect x="779" y="0" width="19" height="21" fill="#a02c2c"/><rect x="798" y="0" width="19" height="21" fill="#c83737"/><rect x="817" y="0" width="19" height="21" fill="#d35f5f"/><rect x="836" y="0" width="19" height="21" fill="#de8787"/><rect x="855" y="0" width="19" height="21" fill="#e9afaf"/><rect x="874" y="0" width="19" height="21" fill="#f4d7d7"/><rect x="893" y="0" width="19" height="21" fill="#241c1c"/><rect x="912" y="0" width="19" height="21" fill="#483737"/><rect x="931" y="0" width="19" height="21" fill="#6c5353"/><rect x="950" y="0" width="19" height="21" fill="#916f6f"/><rect x="969" y="0" width="19" height="21" fill="#ac9393"/><rect x="988" y="0" width="19" height="21" fill="#c8b7b7"/><rect x="1007" y="0" width="19" height="21" fill="#e3dbdb"/><rect x="1026" y="0" width="19" height="21" fill="#2b1100"/><rect x="1045" y="0" width="19" height="21" fill="#552200"/><rect x="1064" y="0" width="19" height="21" fill="#803300"/><rect x="1083" y="0" width="19" height="21" fill="#aa4400"/><rect x="1102" y="0" width="19" height="21" fill="#d45500"/><rect x="1121" y="0" width="19" height="21" fill="#ff6600"/><rect x="1140" y="0" width="19" height="21" fill="#ff7f2a"/><rect x="1159" y="0" width="19" height="21" fill="#ff9955"/><rect x="1178" y="0" width="19" height="21" fill="#ffb380"/><rect x="1197" y="0" width="19" height="21" fill="#ffccaa"/><rect x="1216" y="0" width="19" height="21" fill="#ffe6d5"/><rect x="1235" y="0" width="19" height="21" fill="#28170b"/><rect x="1254" y="0" width="19" height="21" fill="#502d16"/><rect x="1273" y="0" width="19" height="21" fill="#784421"/><rect x="1292" y="0" width="19" height="21" fill="#a05a2c"/><rect x="1311" y="0" width="19" height="21" fill="#c87137"/><rect x="1330" y="0" width="19" height="21" fill="#d38d5f"/><rect x="1349" y="0" width="19" height="21" fill="#deaa87"/><rect x="1368" y="0" width="19" height="21" fill="#e9c6af"/><rect x="1387" y="0" width="19" height="21" fill="#f4e3d7"/><rect x="1406" y="0" width="19" height="21" fill="#241f1c"/><rect x="1425" y="0" width="19" height="21" fill="#483e37"/><rect x="1444" y="0" width="19" height="21" fill="#6c5d53"/><rect x="1463" y="0" width="19" height="21" fill="#917c6f"/><rect x="1482" y="0" width="19" height="21" fill="#ac9d93"/><rect x="1501" y="0" width="19" height="21" fill="#c8beb7"/><rect x="1520" y="0" width="19" height="21" fill="#e3dedb"/><rect x="1539" y="0" width="19" height="21" fill="#2b2200"/><rect x="1558" y="0" width="19" height="21" fill="#554400"/><rect x="1577" y="0" width="19" height="21" fill="#806600"/><rect x="1596" y="0" width="19" height="21" fill="#aa8800"/><rect x="1615" y="0" width="19" height="21" fill="#d4aa00"/><rect x="1634" y="0" width="19" height="21" fill="#ffcc00"/><rect x="1653" y="0" width="19" height="21" fill="#ffd42a"/><rect x="1672" y="0" width="19" height="21" fill="#ffdd55"/><rect x="1691" y="0" width="19" height="21" fill="#ffe680"/><rect x="1710" y="0" width="19" height="21" fill="#ffeeaa"/><rect x="1729" y="0" width="19" height="21" fill="#fff6d5"/><rect x="1748" y="0" width="19" height="21" fill="#28220b"/><rect x="1767" y="0" width="19" height="21" fill="#504416"/><rect x="1786" y="0" width="19" height="21" fill="#786721"/><rect x="1805" y="0" width="19" height="21" fill="#a0892c"/><rect x="1824" y="0" width="19" height="21" fill="#c8ab37"/><rect x="1843" y="0" width="19" height="21" fill="#d3bc5f"/><rect x="1862" y="0" width="19" height="21" fill="#decd87"/><rect x="1881" y="0" width="19" height="21" fill="#e9ddaf"/><rect x="1900" y="0" width="19" height="21" fill="#f4eed7"/><rect x="1919" y="0" width="19" height="21" fill="#24221c"/><rect x="1938" y="0" width="19" height="21" fill="#484537"/><rect x="1957" y="0" width="19" height="21" fill="#6c6753"/><rect x="1976" y="0" width="19" height="21" fill="#918a6f"/><rect x="1995" y="0" width="19" height="21" fill="#aca793"/><rect x="2014" y="0" width="15.5" height="21" fill="#c8c4b7"/></svg>
<div class="a" style="left:3px;top:1380.5px;width:496px;height:5.5px;border-radius:3px;background:#cdcdcd"></div>
<svg style="left:2044px;top:1367px" width="6" height="10" viewBox="0 0 6 10"><path d="M6 0v10L0 5z" fill="#8d9091"/></svg>
<div class="a" style="left:0;top:1390px;width:2066px;height:50px;background:#f6f5f4"></div>
<div class="t " id="F32" style="left:2.5px;top:1395.5px;font-size:17.8px;color:#8f98a1;letter-spacing:-0.631px">Fill:</div>
<div class="t " id="F33" style="left:2.5px;top:1421.2px;font-size:17.8px;color:#8f98a1;letter-spacing:-0.249px">Stroke:</div>
<div class="a" style="left:61px;top:1390px;width:32px;height:24.5px;background:#000;border-radius:3px"></div>
<div class="a" style="left:61px;top:1415px;width:32px;height:25px;background:#000;border-radius:3px"></div>
<div class="t dj" style="left:100px;top:1418.5px;font-size:17px;color:#8c8c8c">0.378</div>
<div class="t " id="F34" style="left:151.3px;top:1406.8px;font-size:18px;color:#949ba4;letter-spacing:-1.058px">O:</div>
<div class="fld" style="left:171px;top:1390px;width:71px;height:50px"></div>
<div class="vs" style="left:207px;top:1391px;height:48px"></div>
<div class="vs" style="left:224px;top:1391px;height:48px"></div>
<div class="t dj" style="left:175.5px;top:1407.1px;font-size:17px;color:#1f2326">100</div>
<div class="a" style="left:211.0px;top:1414.3px;width:10px;height:1.5px;background:#8f9294"></div>
<div class="a" style="left:228.0px;top:1414.3px;width:10px;height:1.5px;background:#dcdcdb"></div>
<div class="a" style="left:232.25px;top:1410.0px;width:1.5px;height:10px;background:#dcdcdb"></div>
<div class="sep" style="left:245px;top:1390px;width:1px;height:50px"></div>
<svg style="left:256.0px;top:1406.0px" width="16" height="16" viewBox="0 0 16 16" ><path d="M.8 9.4 Q8 2.6 15.2 9.4 Q8 15 .8 9.4Z" fill="#ededed" stroke="#cfcfcf" stroke-width="1"/><circle cx="8" cy="9" r="2.7" fill="#d2d2d2"/><path d="M3 4.2l1 2M6 2.6l.5 2.2M10 2.6l-.5 2.2M13 4.2l-1 2" stroke="#cfcfcf" stroke-width=".9"/></svg>
<svg style="left:292.0px;top:1407.0px" width="16" height="16" viewBox="0 0 16 16" ><g transform="rotate(-8 8 8)"><path d="M4.5 8.5V4.6a3 3 0 0 1 6-.5" fill="none" stroke="#cfcfcf" stroke-width="1.4"/><rect x="2.6" y="8" width="10" height="7" rx="1" fill="#f0ead8" stroke="#cfcfcf" stroke-width="1.1"/><path d="M7.6 10.5v2" stroke="#cfcfcf" stroke-width="1.2"/></g></svg>
<div class="fld" style="left:318px;top:1390px;width:87px;height:50px;background:#f6f5f4"></div>
<div class="t " id="F35" style="left:339.3px;top:1406.5px;font-size:17px;color:#8d9297;letter-spacing:-0.571px">(root)</div>
<svg style="left:382px;top:1412.5px" width="10" height="6" viewBox="0 0 10 6"><path d="M0 0h10L5 6z" fill="#8a8d8e"/></svg>
<div class="t dj" id="status" style="left:407.5px;top:1406.2px;font-size:17px;color:#8c8c8c;letter-spacing:0.313px"><b style="color:#8d959c">Path</b> 719 nodes in root. Click selection to toggle scale/rotation handles (or Shift+s).</div>
<div class="sep" style="left:1637px;top:1390px;width:1px;height:50px"></div>
<div class="t " id="F36" style="left:1647.5px;top:1395.5px;font-size:18px;color:#949ba4;letter-spacing:-1.208px">X:</div>
<div class="t " id="F37" style="left:1647.5px;top:1420.5px;font-size:18px;color:#949ba4;letter-spacing:-1.258px">Y:</div>
<div class="t dj" style="left:1680px;top:1394.3px;font-size:17px;color:#8c8c8c">277.88</div>
<div class="t dj" style="left:1680px;top:1419.3px;font-size:17px;color:#8c8c8c">127.36</div>
<div class="t " id="F38" style="left:1750.3px;top:1406.5px;font-size:18px;color:#949ba4;letter-spacing:-1.200px">Z:</div>
<div class="fld" style="left:1774px;top:1390px;width:118px;height:50px"></div>
<div class="vs" style="left:1847px;top:1391px;height:48px"></div>
<div class="vs" style="left:1868px;top:1391px;height:48px"></div>
<div class="t dj" style="left:1786px;top:1407.1px;font-size:17px;color:#1f2326">164%</div>
<div class="a" style="left:1853.0px;top:1414.3px;width:10px;height:1.5px;background:#8f9294"></div>
<div class="a" style="left:1874.0px;top:1414.3px;width:10px;height:1.5px;background:#8f9294"></div>
<div class="a" style="left:1878.25px;top:1410.0px;width:1.5px;height:10px;background:#8f9294"></div>
<div class="t " id="F39" style="left:1902.5px;top:1406.5px;font-size:18px;color:#949ba4;letter-spacing:-1.700px">R:</div>
<div class="fld" style="left:1927px;top:1390px;width:129px;height:50px"></div>
<div class="vs" style="left:2011px;top:1391px;height:48px"></div>
<div class="vs" style="left:2032px;top:1391px;height:48px"></div>
<div class="t dj" style="left:1950.5px;top:1407.1px;font-size:17px;color:#1f2326">0.00°</div>
<div class="a" style="left:2017.0px;top:1414.3px;width:10px;height:1.5px;background:#8f9294"></div>
<div class="a" style="left:2038.0px;top:1414.3px;width:10px;height:1.5px;background:#8f9294"></div>
<div class="a" style="left:2042.25px;top:1410.0px;width:1.5px;height:10px;background:#8f9294"></div>
</body></html>
